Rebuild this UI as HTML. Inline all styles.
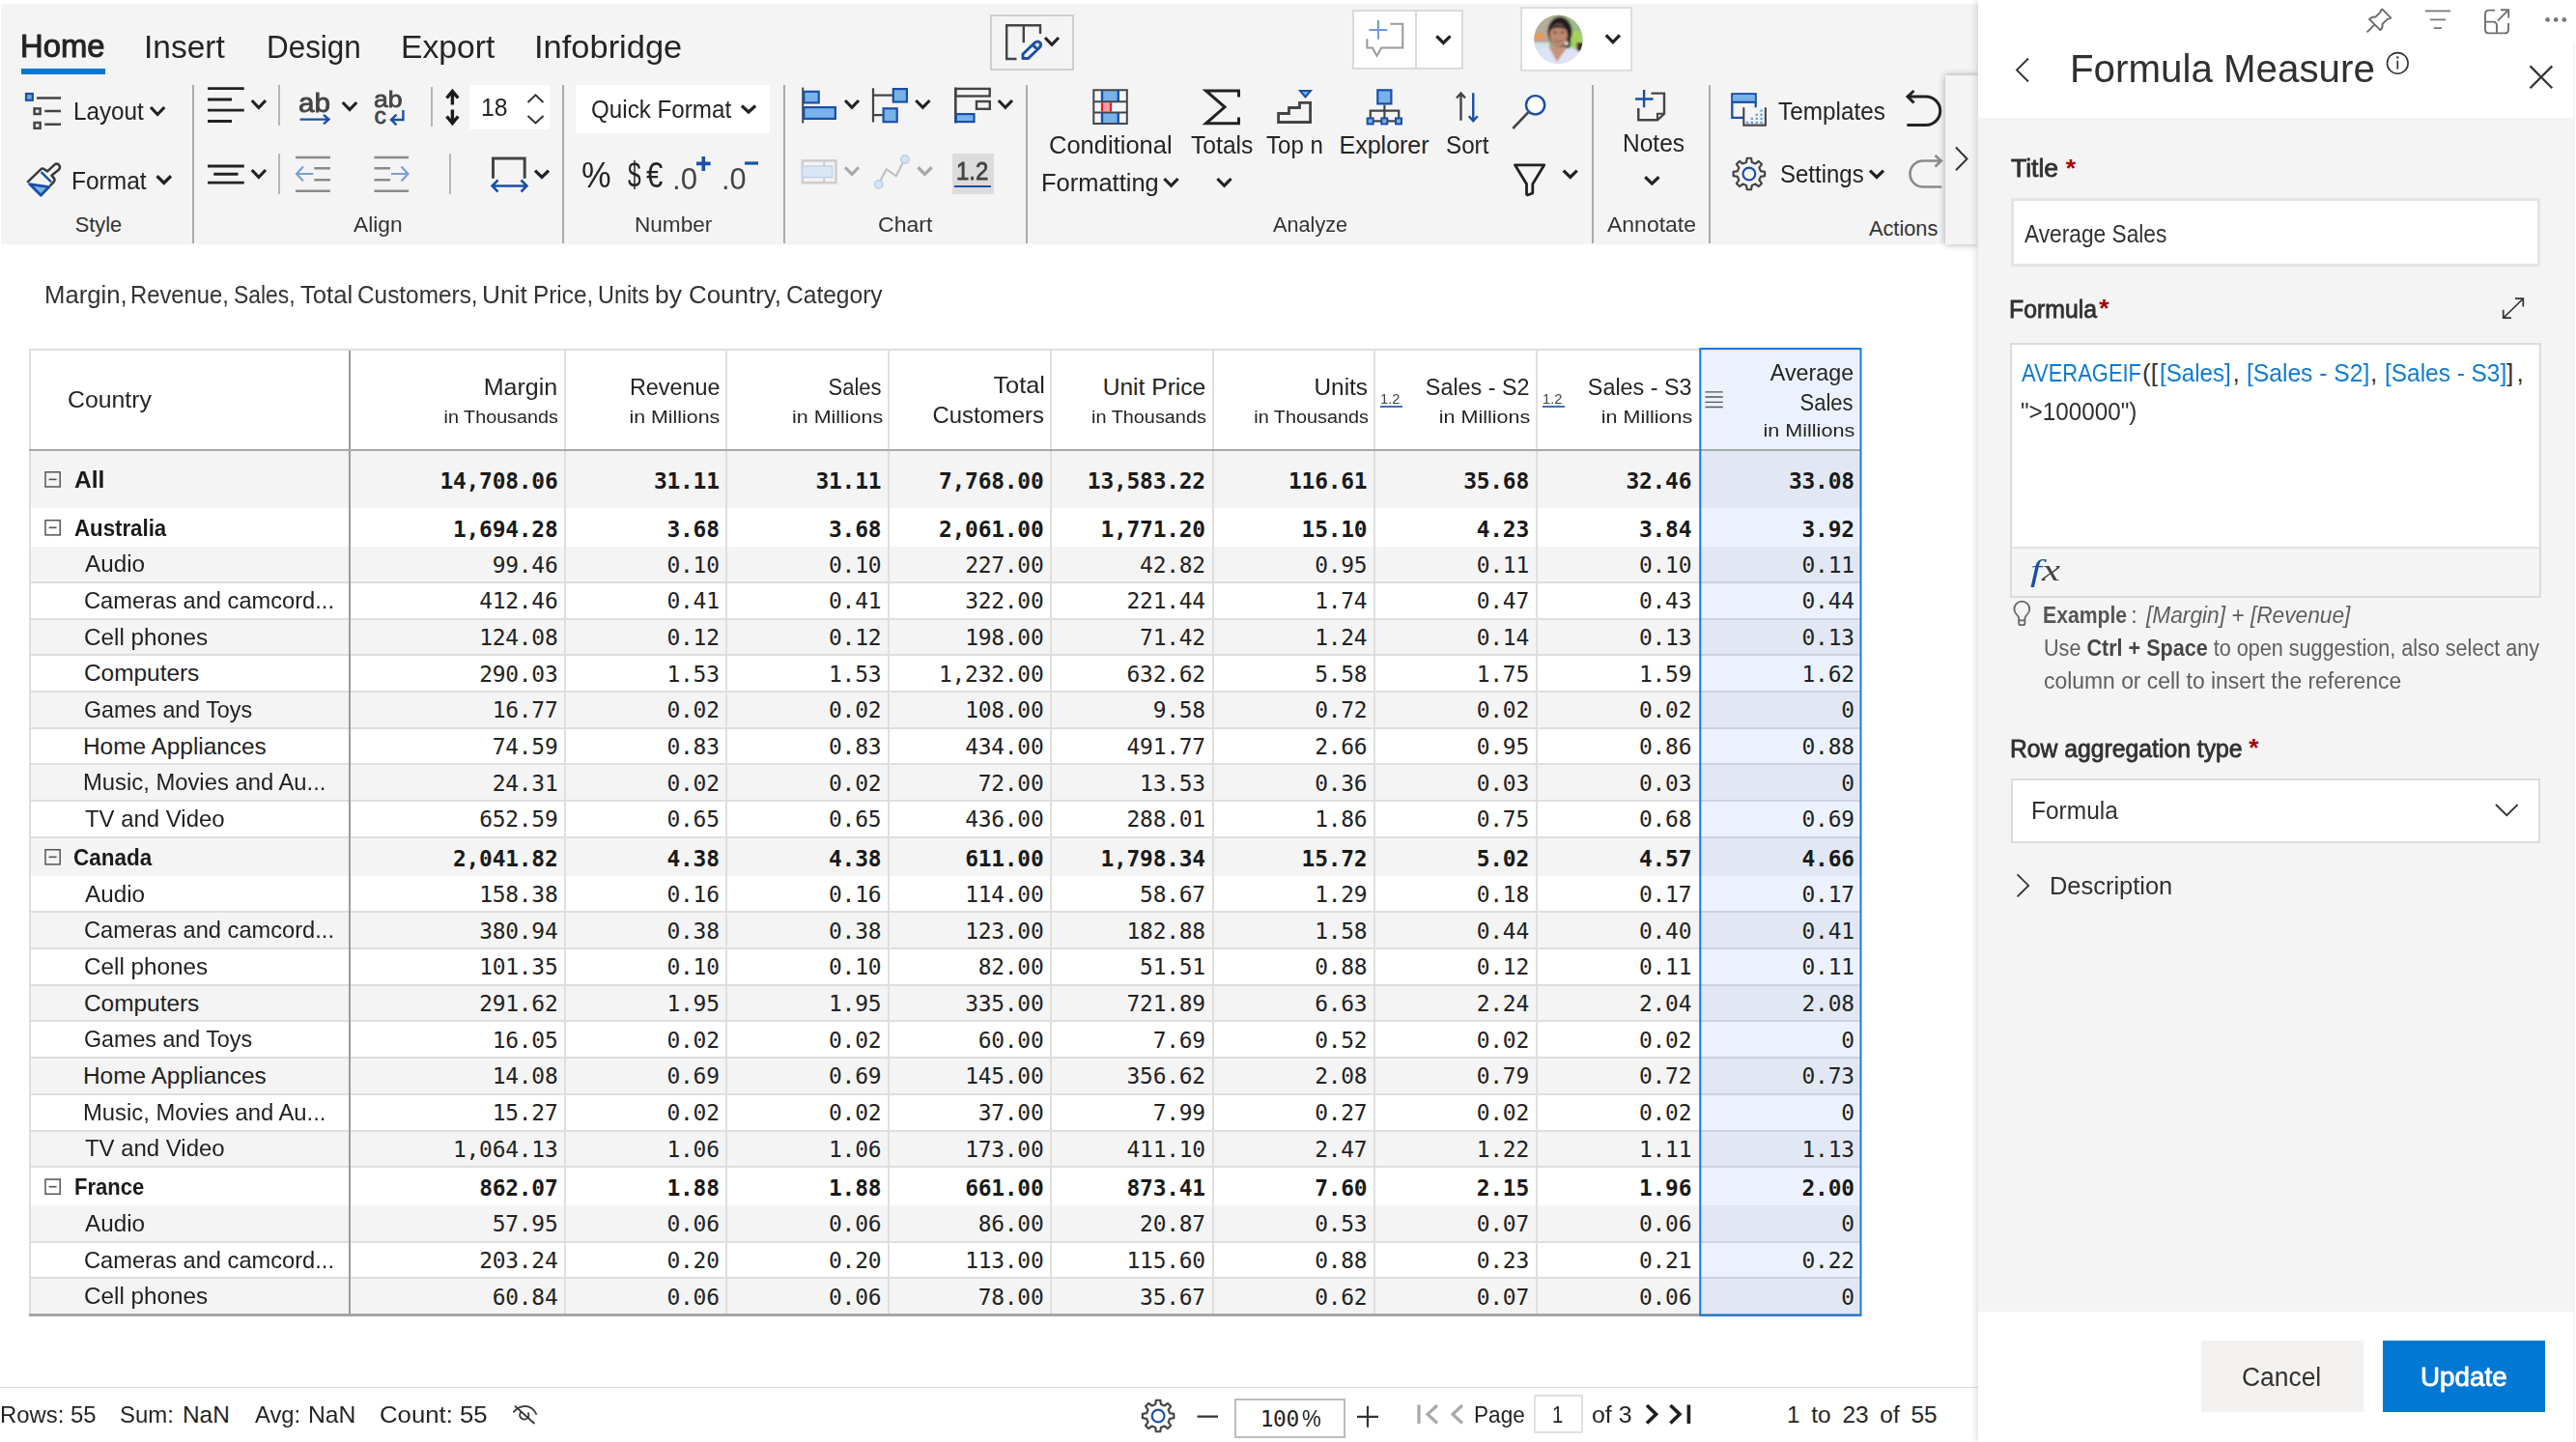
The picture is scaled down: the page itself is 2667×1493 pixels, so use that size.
<!DOCTYPE html>
<html lang="en"><head><meta charset="utf-8"><title>Formula Measure</title>
<style>
html,body{margin:0;padding:0;background:#fff;}
body{width:2667px;height:1493px;position:relative;overflow:hidden;font-family:"Liberation Sans", sans-serif;}
#bg div{position:absolute;box-sizing:border-box;}
#ic{position:absolute;left:0;top:0;}
.t{position:absolute;white-space:pre;display:block;}
.m{font-family:"DejaVu Sans Mono", "Liberation Mono", monospace;}
.f{font-family:"Liberation Serif", serif;}
</style></head><body>
<div id="bg">
<div style="left:1.00px;top:4.00px;width:2047.00px;height:249.00px;background:#f4f4f4;"></div>
<div style="left:22.00px;top:71.30px;width:87.30px;height:5.50px;background:#0078d4;"></div>
<div style="left:198.60px;top:88.00px;width:2.00px;height:164.00px;background:#ababab;"></div>
<div style="left:581.70px;top:88.00px;width:2.00px;height:164.00px;background:#ababab;"></div>
<div style="left:810.70px;top:88.00px;width:2.00px;height:164.00px;background:#ababab;"></div>
<div style="left:1062.00px;top:88.00px;width:2.00px;height:164.00px;background:#ababab;"></div>
<div style="left:1648.40px;top:88.00px;width:2.00px;height:164.00px;background:#ababab;"></div>
<div style="left:1769.40px;top:88.00px;width:2.00px;height:164.00px;background:#ababab;"></div>
<div style="left:288.30px;top:88.00px;width:2.00px;height:41.75px;background:#b5b5b5;"></div>
<div style="left:445.50px;top:90.00px;width:2.00px;height:41.25px;background:#b5b5b5;"></div>
<div style="left:288.30px;top:159.40px;width:2.00px;height:41.85px;background:#b5b5b5;"></div>
<div style="left:464.90px;top:159.40px;width:2.00px;height:41.85px;background:#b5b5b5;"></div>
<div style="left:486.00px;top:88.00px;width:83.00px;height:46.00px;background:#fff;"></div>
<div style="left:595.90px;top:88.00px;width:201.35px;height:49.75px;background:#fff;"></div>
<div style="left:986.00px;top:159.10px;width:42.50px;height:42.15px;background:#dcdcdc;"></div>
<div style="left:988.00px;top:191.90px;width:38.00px;height:2.10px;background:#1a4fa8;"></div>
<div style="left:1024.50px;top:14.75px;width:87.00px;height:57.75px;background:#f4f4f4;border:2px solid #cfcfcf;"></div>
<div style="left:1400.20px;top:9.90px;width:114.70px;height:62.00px;background:#fff;border:2px solid #dadada;"></div>
<div style="left:1465.40px;top:11.00px;width:1.60px;height:60.00px;background:#dadada;"></div>
<div style="left:1574.00px;top:7.30px;width:115.90px;height:66.40px;background:#fff;border:2px solid #dedede;"></div>
<div style="left:2013.60px;top:77.75px;width:34.40px;height:175.25px;background:#f4f4f4;box-shadow:0 0 7px rgba(0,0,0,.35);"></div>
<div style="left:30.30px;top:466.00px;width:1897.10px;height:60.00px;background:#f4f4f4;"></div>
<div style="left:30.30px;top:565.60px;width:1897.10px;height:37.68px;background:#f4f4f4;"></div>
<div style="left:30.30px;top:640.96px;width:1897.10px;height:37.68px;background:#f4f4f4;"></div>
<div style="left:30.30px;top:716.32px;width:1897.10px;height:37.68px;background:#f4f4f4;"></div>
<div style="left:30.30px;top:791.68px;width:1897.10px;height:37.68px;background:#f4f4f4;"></div>
<div style="left:30.30px;top:867.04px;width:1897.10px;height:39.90px;background:#f4f4f4;"></div>
<div style="left:30.30px;top:944.62px;width:1897.10px;height:37.68px;background:#f4f4f4;"></div>
<div style="left:30.30px;top:1019.98px;width:1897.10px;height:37.68px;background:#f4f4f4;"></div>
<div style="left:30.30px;top:1095.34px;width:1897.10px;height:37.68px;background:#f4f4f4;"></div>
<div style="left:30.30px;top:1170.70px;width:1897.10px;height:37.68px;background:#f4f4f4;"></div>
<div style="left:30.30px;top:1248.28px;width:1897.10px;height:37.68px;background:#f4f4f4;"></div>
<div style="left:30.30px;top:1323.64px;width:1897.10px;height:37.68px;background:#f4f4f4;"></div>
<div style="left:30.30px;top:602.08px;width:1897.10px;height:2.00px;background:#dedede;"></div>
<div style="left:30.30px;top:639.76px;width:1897.10px;height:2.00px;background:#dedede;"></div>
<div style="left:30.30px;top:677.44px;width:1897.10px;height:2.00px;background:#dedede;"></div>
<div style="left:30.30px;top:715.12px;width:1897.10px;height:2.00px;background:#dedede;"></div>
<div style="left:30.30px;top:752.80px;width:1897.10px;height:2.00px;background:#dedede;"></div>
<div style="left:30.30px;top:790.48px;width:1897.10px;height:2.00px;background:#dedede;"></div>
<div style="left:30.30px;top:828.16px;width:1897.10px;height:2.00px;background:#dedede;"></div>
<div style="left:30.30px;top:865.84px;width:1897.10px;height:2.00px;background:#dedede;"></div>
<div style="left:30.30px;top:943.42px;width:1897.10px;height:2.00px;background:#dedede;"></div>
<div style="left:30.30px;top:981.10px;width:1897.10px;height:2.00px;background:#dedede;"></div>
<div style="left:30.30px;top:1018.78px;width:1897.10px;height:2.00px;background:#dedede;"></div>
<div style="left:30.30px;top:1056.46px;width:1897.10px;height:2.00px;background:#dedede;"></div>
<div style="left:30.30px;top:1094.14px;width:1897.10px;height:2.00px;background:#dedede;"></div>
<div style="left:30.30px;top:1131.82px;width:1897.10px;height:2.00px;background:#dedede;"></div>
<div style="left:30.30px;top:1169.50px;width:1897.10px;height:2.00px;background:#dedede;"></div>
<div style="left:30.30px;top:1207.18px;width:1897.10px;height:2.00px;background:#dedede;"></div>
<div style="left:30.30px;top:1284.76px;width:1897.10px;height:2.00px;background:#dedede;"></div>
<div style="left:30.30px;top:1322.44px;width:1897.10px;height:2.00px;background:#dedede;"></div>
<div style="left:1759.40px;top:360.90px;width:168.00px;height:1000.42px;background:rgba(20,110,230,0.085);"></div>
<div style="left:584.20px;top:360.90px;width:2.00px;height:1000.42px;background:#dfdfdf;"></div>
<div style="left:751.40px;top:360.90px;width:2.00px;height:1000.42px;background:#dfdfdf;"></div>
<div style="left:919.00px;top:360.90px;width:2.00px;height:1000.42px;background:#dfdfdf;"></div>
<div style="left:1087.20px;top:360.90px;width:2.00px;height:1000.42px;background:#dfdfdf;"></div>
<div style="left:1254.60px;top:360.90px;width:2.00px;height:1000.42px;background:#dfdfdf;"></div>
<div style="left:1422.10px;top:360.90px;width:2.00px;height:1000.42px;background:#dfdfdf;"></div>
<div style="left:1589.70px;top:360.90px;width:2.00px;height:1000.42px;background:#dfdfdf;"></div>
<div style="left:360.90px;top:360.90px;width:2.20px;height:1000.42px;background:#9b9b9b;"></div>
<div style="left:30.30px;top:360.90px;width:1897.10px;height:2.00px;background:#dedede;"></div>
<div style="left:30.30px;top:360.90px;width:2.00px;height:1000.42px;background:#dedede;"></div>
<div style="left:30.30px;top:465.00px;width:1897.10px;height:2.00px;background:#a9a9a9;"></div>
<div style="left:30.30px;top:1360.32px;width:1897.10px;height:2.20px;background:#a6a6a6;"></div>
<div style="left:1429.00px;top:420.40px;width:23.00px;height:2.00px;background:#3d6fc0;"></div>
<div style="left:1596.50px;top:420.40px;width:23.00px;height:2.00px;background:#3d6fc0;"></div>
<div style="left:0.00px;top:1435.60px;width:2048.00px;height:1.80px;background:#dedede;"></div>
<div style="left:1277.60px;top:1448.20px;width:115.30px;height:41.20px;background:#fff;border:2px solid #bdbdbd;"></div>
<div style="left:1588.00px;top:1443.50px;width:51.40px;height:40.80px;background:#fff;border:2px solid #e1e1e1;"></div>
<div style="left:2048.00px;top:0.00px;width:619.00px;height:1493.00px;background:#fff;box-shadow:-1px 0 8px rgba(0,0,0,.17);"></div>
<div style="left:2048.00px;top:121.80px;width:617.00px;height:1236.20px;background:#f4f4f4;"></div>
<div style="left:2664.40px;top:44.00px;width:1.20px;height:1449.00px;background:#f3f3f3;"></div>
<div style="left:2081.90px;top:205.40px;width:548.50px;height:70.60px;background:#fff;border:3px solid #e4e4e4;"></div>
<div style="left:2081.40px;top:355.00px;width:549.20px;height:263.60px;background:#f4f4f4;border:2px solid #dcdcdc;"></div>
<div style="left:2083.40px;top:356.80px;width:545.40px;height:209.80px;background:#fff;"></div>
<div style="left:2083.40px;top:566.40px;width:545.40px;height:1.40px;background:#e3e3e3;"></div>
<div style="left:2081.90px;top:806.20px;width:548.40px;height:66.50px;background:#fff;border:2px solid #dcdcdc;"></div>
<div style="left:2279.00px;top:1388.10px;width:168.00px;height:74.30px;background:#f3f2f1;"></div>
<div style="left:2466.70px;top:1388.10px;width:168.00px;height:74.30px;background:#0078d4;"></div>
</div>
<svg id="ic" width="2667" height="1493" viewBox="0 0 2667 1493" stroke-linecap="butt" stroke-linejoin="miter">
<path d="M156.00 111.00 L163.12 118.50 L170.25 111.00" fill="none" stroke="#222" stroke-width="3.2"/>
<path d="M162.50 182.25 L169.75 189.40 L177.00 182.25" fill="none" stroke="#222" stroke-width="3.2"/>
<path d="M260.75 104.00 L267.88 111.50 L275.00 104.00" fill="none" stroke="#222" stroke-width="3.2"/>
<path d="M260.75 176.00 L267.88 183.50 L275.00 176.00" fill="none" stroke="#222" stroke-width="3.2"/>
<path d="M354.75 106.00 L362.00 113.50 L369.25 106.00" fill="none" stroke="#222" stroke-width="3.2"/>
<path d="M554.00 176.60 L561.00 183.50 L568.00 176.60" fill="none" stroke="#222" stroke-width="3.2"/>
<path d="M767.90 109.50 L775.00 116.00 L782.10 109.50" fill="none" stroke="#222" stroke-width="3.2"/>
<path d="M875.00 104.00 L882.00 111.25 L889.00 104.00" fill="none" stroke="#222" stroke-width="3.2"/>
<path d="M948.25 104.00 L955.38 111.25 L962.50 104.00" fill="none" stroke="#222" stroke-width="3.2"/>
<path d="M1033.75 104.00 L1040.88 111.25 L1048.00 104.00" fill="none" stroke="#222" stroke-width="3.2"/>
<path d="M1205.40 185.00 L1212.50 192.25 L1219.60 185.00" fill="none" stroke="#222" stroke-width="3.2"/>
<path d="M1260.40 185.00 L1267.50 192.25 L1274.60 185.00" fill="none" stroke="#222" stroke-width="3.2"/>
<path d="M1618.75 176.60 L1625.75 183.50 L1632.75 176.60" fill="none" stroke="#222" stroke-width="3.2"/>
<path d="M1703.25 183.25 L1710.38 190.10 L1717.50 183.25" fill="none" stroke="#222" stroke-width="3.2"/>
<path d="M1936.00 176.60 L1943.00 183.50 L1950.00 176.60" fill="none" stroke="#222" stroke-width="3.2"/>
<path d="M1082.00 39.00 L1089.00 46.30 L1096.00 39.00" fill="none" stroke="#222" stroke-width="3.2"/>
<path d="M1487.30 37.30 L1494.40 44.40 L1501.50 37.30" fill="none" stroke="#222" stroke-width="3.2"/>
<path d="M1662.80 36.40 L1669.90 43.60 L1677.00 36.40" fill="none" stroke="#222" stroke-width="3.2"/>
<path d="M875.00 173.25 L882.00 180.40 L889.00 173.25" fill="none" stroke="#a8a8a8" stroke-width="3.2"/>
<path d="M950.40 173.25 L957.50 180.40 L964.60 173.25" fill="none" stroke="#a8a8a8" stroke-width="3.2"/>
<path d="M546.5 106 L554.5 98.3 L562.5 106 M546.5 120 L554.5 127.5 L562.5 120" fill="none" stroke="#333" stroke-width="2"/>
<rect x="27" y="97" width="6.8" height="6.8" fill="#6aa5e8" stroke="#1a4fa8" stroke-width="2.2"/>
<g fill="none" stroke="#444" stroke-width="2.5"><path d="M38 101.4 H63 M46.25 115 H63 M46.25 128.75 H63"/><rect x="35.6" y="112.4" width="6" height="5.6"/><rect x="35.6" y="127" width="6" height="5.8"/></g>
<path d="M28.2 188.9 L42.2 175.4 Q43.8 173.8 45.6 175.1 L49.1 177.4 L56.4 170.6 Q59.2 168.6 61.2 170.9 Q63 173.3 60.8 175.8 L53.4 181.8 L55.6 184 Q57.4 186.2 55.6 188.4 L51.6 192.7" fill="none" stroke="#3a3a3a" stroke-width="2.5" stroke-linejoin="round"/>
<path d="M30.6 190.6 L50.8 193.6 L42.3 202.2 Z" fill="#78b2e8" stroke="#1a4fa8" stroke-width="2.8" stroke-linejoin="round"/>
<path d="M42.6 178.2 L53 188.4" stroke="#1a4fa8" stroke-width="2.4"/>
<path d="M215 91.7 H252.75 M215 103 H240 M215 114.2 H252.75 M215 125.5 H240" stroke="#222" stroke-width="2.8"/>
<path d="M215 172 H252.75 M221.25 180.25 H246.5 M215 189.2 H252.75" stroke="#222" stroke-width="2.8"/>
<path d="M310.6 123.6 H340 M335 118.8 L340.5 123.6 L335 128.4" fill="none" stroke="#1a4fa8" stroke-width="2.4"/>
<path d="M417.4 114 V124 H405.5 M410.5 118.6 L405 124 L410.5 129.4" fill="none" stroke="#1a4fa8" stroke-width="2.4"/>
<path d="M468.4 96 V108.5 M468.4 113.5 V126 M462.5 101.5 L468.4 94.5 L474.3 101.5 M462.5 120.5 L468.4 127.5 L474.3 120.5" fill="none" stroke="#1a1a1a" stroke-width="3.4"/>
<path d="M306 163.1 H341.9 M325.25 174.3 H341.9 M325.25 186.2 H341.9 M306 197.7 H341.9" stroke="#8a8a8a" stroke-width="2.5"/>
<path d="M307.5 180 H324.4 M314 172.5 L307 180 L314 187.5" fill="none" stroke="#7b9fd6" stroke-width="2.2"/>
<path d="M387.5 163.1 H423.1 M387.5 174.3 H404 M387.5 186.2 H404 M387.5 197.7 H423.1" stroke="#8a8a8a" stroke-width="2.5"/>
<path d="M405 180 H422 M415.5 172.5 L422.5 180 L415.5 187.5" fill="none" stroke="#7b9fd6" stroke-width="2.2"/>
<path d="M510.5 184.75 V164 H543.2 V184.75" fill="none" stroke="#444" stroke-width="3"/>
<path d="M510 192.5 H545 M515.5 186.5 L509.5 192.5 L515.5 198.5 M539.5 186.5 L545.5 192.5 L539.5 198.5" fill="none" stroke="#1a4fa8" stroke-width="2.5"/>
<path d="M721 169.4 H735.6 M728.3 162 V176.9" stroke="#1a4fa8" stroke-width="3.6"/>
<path d="M771 169 H785" stroke="#1a4fa8" stroke-width="3.2"/>
<path d="M831.2 90.6 V127.5" stroke="#444" stroke-width="2"/>
<rect x="832.3" y="94.8" width="15.4" height="11.6" fill="#78b2e8" stroke="#1a4fa8" stroke-width="2.2"/>
<rect x="832.3" y="111.1" width="32.6" height="11.8" fill="#78b2e8" stroke="#1a4fa8" stroke-width="2.2"/>
<path d="M904 91.25 V126.5 M904 98.6 H924 M904 119.1 H914" fill="none" stroke="#444" stroke-width="2.2"/>
<rect x="924.8" y="92.1" width="14.1" height="13.4" fill="#78b2e8" stroke="#1a4fa8" stroke-width="2.2"/>
<rect x="914.6" y="112.3" width="14.1" height="13.9" fill="#78b2e8" stroke="#1a4fa8" stroke-width="2.2"/>
<path d="M989.3 90.6 V127.5" stroke="#444" stroke-width="2.6"/>
<rect x="989.3" y="91.9" width="35.4" height="7.6" fill="none" stroke="#444" stroke-width="2.4"/>
<rect x="1011" y="105" width="13.8" height="7.8" fill="none" stroke="#444" stroke-width="2.4"/>
<rect x="989.9" y="118.1" width="18.6" height="8" fill="#78b2e8" stroke="#1a4fa8" stroke-width="2.2"/>
<rect x="830.8" y="166.4" width="34.7" height="22.8" fill="none" stroke="#cdcdcd" stroke-width="2.6"/>
<path d="M853.2 166 V190" stroke="#cdcdcd" stroke-width="2.2"/>
<rect x="830.6" y="172" width="31" height="11.6" fill="#d9e6f5" stroke="#c3d5ec" stroke-width="1.6"/>
<path d="M911.25 187.5 L917.75 175.25 L927.75 182.25 L935 168.1" fill="none" stroke="#bdbdbd" stroke-width="2"/>
<circle cx="936.9" cy="165" r="4.2" fill="#d5e3f3" stroke="#b8cde8" stroke-width="1.4"/><circle cx="909.75" cy="191" r="4.2" fill="#d5e3f3" stroke="#b8cde8" stroke-width="1.4"/>
<rect x="1140" y="93.3" width="18.8" height="11.9" fill="#78b2e8"/><rect x="1140" y="116.6" width="18.8" height="11.3" fill="#78b2e8"/>
<rect x="1140" y="106.2" width="10.6" height="9.4" fill="#fb9aa4"/>
<path d="M1132.3 93.3 H1166.8 V127.9 H1132.3 Z M1132.3 105.2 H1166.8 M1132.3 116.6 H1166.8" fill="none" stroke="#444" stroke-width="2"/>
<path d="M1141 93.3 V105.2 M1157.8 93.3 V105.2 M1141 116.6 V128.9 M1157.8 116.6 V128.9" stroke="#1a4fa8" stroke-width="2.4"/>
<path d="M1141 106.2 V115.6 M1150 106.2 V115.6" stroke="#e02020" stroke-width="2.2"/>
<path d="M1282.5 100.5 V94 H1248.5 L1268 110.8 L1248.5 127.8 H1282.5 V121.5" fill="none" stroke="#222" stroke-width="3"/>
<path d="M1323.6 126.5 V117.5 H1334.5 V111.5 H1345.5 V106.3 H1356.6 V126.5 Z" fill="none" stroke="#444" stroke-width="2.8"/>
<path d="M1346 94 H1357 L1351.5 100.5 Z" fill="#78b2e8" stroke="#1a4fa8" stroke-width="2"/>
<path d="M1433.4 108.5 V122 M1418.8 122 V114.7 H1448.2 V122 M1422 125.4 H1444" fill="none" stroke="#444" stroke-width="2.2"/>
<rect x="1426.3" y="93.3" width="14.1" height="14.1" fill="#78b2e8" stroke="#1a4fa8" stroke-width="2.2"/>
<rect x="1415.7" y="122.4" width="6" height="6" fill="#78b2e8" stroke="#1a4fa8" stroke-width="2"/>
<rect x="1430.3" y="122.4" width="6" height="6" fill="#78b2e8" stroke="#1a4fa8" stroke-width="2"/>
<rect x="1445" y="122.4" width="6" height="6" fill="#78b2e8" stroke="#1a4fa8" stroke-width="2"/>
<path d="M1512.5 97 V124.75 M1508 101.5 L1512.5 96.5 L1517 101.5" fill="none" stroke="#444" stroke-width="2.4"/>
<path d="M1525.25 96.25 V125 M1520.8 120.3 L1525.25 125.3 L1529.8 120.3" fill="none" stroke="#1a4fa8" stroke-width="2.4"/>
<circle cx="1589.6" cy="108.75" r="9.6" fill="#fff" stroke="#1a4fa8" stroke-width="2.4"/>
<path d="M1582.2 116.4 L1566.3 133" stroke="#444" stroke-width="2.6"/>
<path d="M1568.5 170.8 H1598.8 L1586.8 190.5 V200 L1581.5 202 L1580.5 201 V190.5 Z" fill="none" stroke="#222" stroke-width="2.8" stroke-linejoin="round"/>
<path d="M1709.5 96.6 H1723 V117.8 L1716 124.3 H1696.3 V112" fill="none" stroke="#444" stroke-width="2.4"/>
<path d="M1723 117.8 H1716 V124.3" fill="none" stroke="#444" stroke-width="2"/>
<path d="M1693 102.5 H1711.5 M1702.1 93 V111.25" stroke="#1a4fa8" stroke-width="2.4"/>
<rect x="1793.3" y="97.3" width="24.4" height="24.6" fill="#f4f4f4" stroke="#1a4fa8" stroke-width="2.3"/>
<rect x="1794.4" y="98.4" width="22.2" height="6.6" fill="#78b2e8"/><path d="M1793.3 105.8 H1817.7" stroke="#1a4fa8" stroke-width="2.3"/>
<path d="M1805.3 111.3 V129.6 H1827.9 V111.3" fill="#f4f4f4" stroke="#444" stroke-width="2.1"/>
<rect x="1822.4" y="125.75" width="2.3" height="2.3" fill="#5fa0e8"/>
<rect x="1817.6" y="125.75" width="2.3" height="2.3" fill="#5fa0e8"/>
<rect x="1812.7" y="125.75" width="2.3" height="2.3" fill="#5fa0e8"/>
<rect x="1807.9" y="125.75" width="2.3" height="2.3" fill="#5fa0e8"/>
<rect x="1822.4" y="121.75" width="2.3" height="2.3" fill="#5fa0e8"/>
<rect x="1817.6" y="121.75" width="2.3" height="2.3" fill="#5fa0e8"/>
<rect x="1812.7" y="121.75" width="2.3" height="2.3" fill="#5fa0e8"/>
<rect x="1822.4" y="117.65" width="2.3" height="2.3" fill="#5fa0e8"/>
<rect x="1817.6" y="117.65" width="2.3" height="2.3" fill="#5fa0e8"/>
<rect x="1822.4" y="113.45" width="2.3" height="2.3" fill="#5fa0e8"/>
<path d="M1808.72 163.75 L1813.08 163.75 L1813.77 168.04 L1817.33 169.51 L1820.85 166.96 L1823.94 170.05 L1821.39 173.57 L1822.86 177.13 L1827.15 177.82 L1827.15 182.18 L1822.86 182.87 L1821.39 186.43 L1823.94 189.95 L1820.85 193.04 L1817.33 190.49 L1813.77 191.96 L1813.08 196.25 L1808.72 196.25 L1808.03 191.96 L1804.47 190.49 L1800.95 193.04 L1797.86 189.95 L1800.41 186.43 L1798.94 182.87 L1794.65 182.18 L1794.65 177.82 L1798.94 177.13 L1800.41 173.57 L1797.86 170.05 L1800.95 166.96 L1804.47 169.51 L1808.03 168.04 Z" fill="none" stroke="#444" stroke-width="2.2" stroke-linejoin="round"/>
<circle cx="1810.9" cy="180" r="6.4" fill="none" stroke="#1a4fa8" stroke-width="2.2"/>
<path d="M1975.5 100 H1994 A14 14 0 0 1 1994 129.5 H1974.4 M1981.5 94 L1975 100 L1981.5 106.5" fill="none" stroke="#222" stroke-width="3"/>
<path d="M2009.5 166.5 H1991 A13.5 13.5 0 0 0 1991 193.5 H2010.4 M2003.5 161 L2009.8 166.5 L2003.5 172.5" fill="none" stroke="#8a8a8a" stroke-width="2.6"/>
<path d="M2025 152.5 L2036.5 164.5 L2025 176.3" fill="none" stroke="#333" stroke-width="2"/>
<path d="M1052.5 61 H1042.2 V26.2 H1077 V35 M1059.8 26.2 V44.2" fill="none" stroke="#444" stroke-width="2.4"/>
<path d="M1059 56 L1071 44.5 Q1074.5 41.8 1076.8 44.2 Q1078.6 46.8 1076 49.5 L1064.5 60.5 H1059 Z M1069.2 46.4 L1074.2 51.4" fill="none" stroke="#1a4fa8" stroke-width="3" stroke-linejoin="round"/>
<path d="M1439.4 24.8 H1452.3 V49.5 H1430.2 L1425.5 57.8 L1420.9 49.5 H1415.4 V40.3" fill="none" stroke="#9a9a9a" stroke-width="2"/>
<path d="M1417.4 31 H1436.4 M1426.9 21.1 V40.7" stroke="#6c9bd6" stroke-width="2"/>
<defs><clipPath id="avc"><circle cx="1613.4" cy="40.9" r="25.3"/></clipPath><filter id="avb" x="-10%" y="-10%" width="120%" height="120%"><feGaussianBlur stdDeviation="1.1"/></filter></defs>
<g clip-path="url(#avc)"><g filter="url(#avb)"><rect x="1584" y="11" width="60" height="60" fill="#a3ad8c"/><rect x="1584" y="11" width="22" height="30" fill="#b4ac98"/><rect x="1622" y="14" width="22" height="20" fill="#9fba86"/><rect x="1624" y="32" width="20" height="22" fill="#a4d162"/><rect x="1586" y="35" width="13" height="4.4" fill="#f2973a"/><rect x="1586" y="39.4" width="14" height="5" fill="#c9a08c"/><rect x="1586" y="44" width="18" height="10" fill="#cfe3e6"/><rect x="1632.5" y="44" width="8" height="11" fill="#4a2433"/><path d="M1586 72 V56 Q1596 47.5 1604 48.5 L1612 62 L1623 48.5 Q1634 50 1642 60 V72 Z" fill="#dfe3f6"/><path d="M1603.5 48.5 L1612 64 L1623.5 47.5 Z" fill="#c59478"/><ellipse cx="1615" cy="33" rx="12.6" ry="15.6" fill="#221b22"/><path d="M1622 36 Q1628.5 40 1625 50 L1620 49 Z" fill="#221b22"/><ellipse cx="1613.6" cy="36.6" rx="9.3" ry="11.6" fill="#c08a72"/><path d="M1605 31 Q1613 20.5 1622.5 31 Q1613 26.5 1605 31 Z" fill="#221b22"/><circle cx="1621.8" cy="45" r="1.9" fill="#f3f1ea"/><ellipse cx="1610" cy="33.4" rx="2.2" ry="1" fill="#5e3b32"/><ellipse cx="1617.6" cy="33.6" rx="2.2" ry="1" fill="#5e3b32"/><path d="M1609.4 41.6 Q1613.6 44.4 1617.8 41.6" fill="none" stroke="#8d5548" stroke-width="1.2"/></g></g>
<rect x="1760.3" y="361.00" width="166.2" height="1000.82" fill="none" stroke="#1b7bdc" stroke-width="2"/>
<path d="M1765.5 405.8 H1783.8 M1765.5 411 H1783.8 M1765.5 416.3 H1783.8 M1765.5 421.5 H1783.8" stroke="#555" stroke-width="1.3"/>
<rect x="47.0" y="488.80" width="15.2" height="15.2" fill="none" stroke="#555" stroke-width="1.5"/><path d="M50.6 496.40 H58.6" stroke="#555" stroke-width="1.6"/>
<rect x="47.0" y="538.70" width="15.2" height="15.2" fill="none" stroke="#555" stroke-width="1.5"/><path d="M50.6 546.30 H58.6" stroke="#555" stroke-width="1.6"/>
<rect x="47.0" y="879.74" width="15.2" height="15.2" fill="none" stroke="#555" stroke-width="1.5"/><path d="M50.6 887.34 H58.6" stroke="#555" stroke-width="1.6"/>
<rect x="47.0" y="1221.08" width="15.2" height="15.2" fill="none" stroke="#555" stroke-width="1.5"/><path d="M50.6 1228.68 H58.6" stroke="#555" stroke-width="1.6"/>
<g fill="none" stroke="#333" stroke-width="1.8"><path d="M531.4 1462.4 Q537 1455.6 544 1455.8 Q551.6 1456.2 555.6 1464.6"/><path d="M539.6 1461.6 A4.6 4.6 0 1 0 546.6 1462.4"/><path d="M533 1455.6 L553.4 1474"/></g>
<path d="M1196.92 1449.75 L1201.28 1449.75 L1201.97 1454.04 L1205.53 1455.51 L1209.05 1452.96 L1212.14 1456.05 L1209.59 1459.57 L1211.06 1463.13 L1215.35 1463.82 L1215.35 1468.18 L1211.06 1468.87 L1209.59 1472.43 L1212.14 1475.95 L1209.05 1479.04 L1205.53 1476.49 L1201.97 1477.96 L1201.28 1482.25 L1196.92 1482.25 L1196.23 1477.96 L1192.67 1476.49 L1189.15 1479.04 L1186.06 1475.95 L1188.61 1472.43 L1187.14 1468.87 L1182.85 1468.18 L1182.85 1463.82 L1187.14 1463.13 L1188.61 1459.57 L1186.06 1456.05 L1189.15 1452.96 L1192.67 1455.51 L1196.23 1454.04 Z" fill="none" stroke="#444" stroke-width="2.2" stroke-linejoin="round"/>
<circle cx="1199.1" cy="1466" r="6.4" fill="none" stroke="#1a4fa8" stroke-width="2.2"/>
<path d="M1239.5 1466.6 H1261 M1405 1466.8 H1427 M1416 1455.8 V1477.8" stroke="#333" stroke-width="2.2"/>
<path d="M1469 1454.5 V1474 M1488 1455 L1478 1464.2 L1488 1473.5 M1514 1455 L1504 1464.2 L1514 1473.5" fill="none" stroke="#a9a9a9" stroke-width="3.2"/>
<path d="M1705 1455 L1714.6 1464.2 L1705 1473.5 M1729.4 1455 L1739 1464.2 L1729.4 1473.5 M1748.4 1454.5 V1474" fill="none" stroke="#1f1f1f" stroke-width="3.6"/>
<path d="M2100 60.5 L2088 72.5 L2100 84.5" fill="none" stroke="#333" stroke-width="1.9"/>
<circle cx="2482.3" cy="65.4" r="10.8" fill="none" stroke="#333" stroke-width="1.6"/><path d="M2482.3 62.8 V71.6" stroke="#333" stroke-width="1.7"/><circle cx="2482.3" cy="59.4" r="1.2" fill="#333"/>
<path d="M2619.5 68.4 L2642.3 91.2 M2642.3 68.4 L2619.5 91.2" stroke="#333" stroke-width="2.2"/>
<g fill="none" stroke="#666" stroke-width="1.8" stroke-linejoin="round"><path d="M2466.2 9.4 L2475.4 18.6 Q2473.5 20 2471.8 19.6 L2466.6 24.8 Q2467.2 28.6 2464.4 31.2 L2453 19.8 Q2455.6 17 2459.4 17.6 L2464.6 12.4 Q2464.6 10.4 2466.2 9.4 Z"/><path d="M2458.6 25.4 L2450.6 33.4"/></g>
<path d="M2511 11.3 H2537 M2516 20.4 H2532 M2520 29.2 H2528" stroke="#777" stroke-width="1.8"/>
<g fill="none" stroke="#707070" stroke-width="1.9"><path d="M2583 10.6 H2577 Q2573 10.6 2573 14.6 V30.4 Q2573 34.4 2577 34.4 H2593 Q2597 34.4 2597 30.4 V24"/><path d="M2573 22.6 H2581 Q2585 22.6 2585 26.6 V34.4"/><path d="M2586 21.4 L2597 10.4 M2589 10.2 H2597.2 V18.4"/></g>
<circle cx="2637.6" cy="20.4" r="2.3" fill="#777"/>
<circle cx="2646.2" cy="20.4" r="2.3" fill="#777"/>
<circle cx="2654.8" cy="20.4" r="2.3" fill="#777"/>
<path d="M2592 329 L2612 309.5 M2604 309.2 H2612.3 V317.5 M2591.7 320.8 V329.2 H2600" fill="none" stroke="#333" stroke-width="1.7"/>
<g fill="none" stroke="#666" stroke-width="1.8" stroke-linejoin="round"><path d="M2090.2 642.4 V640.4 Q2090 638.4 2088.2 636.6 A7.9 7.9 0 1 1 2098.4 636.6 Q2096.6 638.4 2096.4 640.4 V642.4"/><path d="M2090.2 642.4 H2096.4 V645.2 Q2096.4 647.2 2094.4 647.2 H2092.2 Q2090.2 647.2 2090.2 645.2 Z"/></g>
<path d="M2584 833 L2595.3 844.2 L2606.6 833" fill="none" stroke="#333" stroke-width="1.8"/>
<path d="M2088.6 905.4 L2100.2 916.9 L2088.6 928.4" fill="none" stroke="#333" stroke-width="1.8"/>
</svg>
<div id="tx">
<span class="t" style="top:31.29px;font-size:33.8px;line-height:33.8px;color:#252423;-webkit-text-stroke:1.05px;left:21.36px;transform-origin:0 0;transform:scaleX(0.9696);">Home</span>
<span class="t" style="top:31.80px;font-size:33.2px;line-height:33.2px;color:#252423;left:149.47px;transform-origin:0 0;transform:scaleX(1.0090);">Insert</span>
<span class="t" style="top:31.80px;font-size:33.2px;line-height:33.2px;color:#252423;left:276.11px;transform-origin:0 0;transform:scaleX(0.9464);">Design</span>
<span class="t" style="top:31.80px;font-size:33.2px;line-height:33.2px;color:#252423;left:415.47px;transform-origin:0 0;transform:scaleX(1.0139);">Export</span>
<span class="t" style="top:31.80px;font-size:33.2px;line-height:33.2px;color:#252423;left:552.89px;transform-origin:0 0;transform:scaleX(1.0381);">Infobridge</span>
<span class="t" style="top:102.17px;font-size:26.5px;line-height:26.5px;color:#252423;left:75.92px;transform-origin:0 0;transform:scaleX(0.9156);">Layout</span>
<span class="t" style="top:174.42px;font-size:26.5px;line-height:26.5px;color:#252423;left:74.05px;transform-origin:0 0;transform:scaleX(0.9254);">Format</span>
<span class="t" style="top:222.15px;font-size:21.8px;line-height:21.8px;color:#333;left:77.75px;transform-origin:0 0;">Style</span>
<span class="t" style="top:222.15px;font-size:21.8px;line-height:21.8px;color:#333;left:366.25px;transform-origin:0 0;transform:scaleX(1.0434);">Align</span>
<span class="t" style="top:222.15px;font-size:21.8px;line-height:21.8px;color:#333;left:656.96px;transform-origin:0 0;transform:scaleX(1.0359);">Number</span>
<span class="t" style="top:222.15px;font-size:21.8px;line-height:21.8px;color:#333;left:908.69px;transform-origin:0 0;transform:scaleX(1.0575);">Chart</span>
<span class="t" style="top:222.15px;font-size:21.8px;line-height:21.8px;color:#333;left:1318.20px;transform-origin:0 0;transform:scaleX(0.9945);">Analyze</span>
<span class="t" style="top:221.75px;font-size:21.8px;line-height:21.8px;color:#333;left:1664.40px;transform-origin:0 0;transform:scaleX(1.0546);">Annotate</span>
<span class="t" style="top:225.55px;font-size:21.8px;line-height:21.8px;color:#333;left:1934.90px;transform-origin:0 0;">Actions</span>
<span class="t" style="top:92.92px;font-size:27.5px;line-height:27.5px;color:#444;-webkit-text-stroke:0.85px;left:308.92px;transform-origin:0 0;transform:scaleX(1.0753);">ab</span>
<span class="t" style="top:90.86px;font-size:24.5px;line-height:24.5px;color:#444;-webkit-text-stroke:0.76px;left:387.42px;transform-origin:0 0;transform:scaleX(1.0829);">ab</span>
<span class="t" style="top:107.96px;font-size:24.5px;line-height:24.5px;color:#444;-webkit-text-stroke:0.76px;left:387.50px;transform-origin:0 0;">c</span>
<span class="t" style="top:98.42px;font-size:26.5px;line-height:26.5px;color:#252423;left:497.53px;transform-origin:0 0;transform:scaleX(0.9350);">18</span>
<span class="t" style="top:100.49px;font-size:26px;line-height:26px;color:#252423;left:611.57px;transform-origin:0 0;transform:scaleX(0.9307);">Quick Format</span>
<span class="t" style="top:162.61px;font-size:37.5px;line-height:37.5px;color:#252423;left:601.83px;transform-origin:0 0;transform:scaleX(0.9194);">%</span>
<span class="t" style="top:162.61px;font-size:37.5px;line-height:37.5px;color:#252423;left:650.00px;transform-origin:0 0;transform:scaleX(0.6548);">$</span>
<span class="t" style="top:162.61px;font-size:37.5px;line-height:37.5px;color:#252423;left:668.75px;transform-origin:0 0;transform:scaleX(0.8333);">€</span>
<span class="t" style="top:169.11px;font-size:32px;line-height:32px;color:#444;left:696.05px;transform-origin:0 0;transform:scaleX(0.9732);">.0</span>
<span class="t" style="top:169.11px;font-size:32px;line-height:32px;color:#444;left:747.08px;transform-origin:0 0;transform:scaleX(0.9585);">.0</span>
<span class="t" style="top:165.01px;font-size:25.5px;line-height:25.5px;color:#444;-webkit-text-stroke:0.79px;left:990.31px;transform-origin:0 0;transform:scaleX(0.9394);">1.2</span>
<span class="t" style="top:138.44px;font-size:25px;line-height:25px;color:#252423;left:1086.48px;transform-origin:0 0;transform:scaleX(1.0201);">Conditional</span>
<span class="t" style="top:176.94px;font-size:25px;line-height:25px;color:#252423;left:1077.96px;transform-origin:0 0;transform:scaleX(1.0186);">Formatting</span>
<span class="t" style="top:138.44px;font-size:25px;line-height:25px;color:#252423;left:1233.00px;transform-origin:0 0;transform:scaleX(0.9860);">Totals</span>
<span class="t" style="top:138.44px;font-size:25px;line-height:25px;color:#252423;left:1310.60px;transform-origin:0 0;transform:scaleX(0.9626);">Top n</span>
<span class="t" style="top:138.44px;font-size:25px;line-height:25px;color:#252423;left:1386.51px;transform-origin:0 0;">Explorer</span>
<span class="t" style="top:138.44px;font-size:25px;line-height:25px;color:#252423;left:1496.53px;transform-origin:0 0;transform:scaleX(0.9687);">Sort</span>
<span class="t" style="top:135.94px;font-size:25px;line-height:25px;color:#252423;left:1679.94px;transform-origin:0 0;transform:scaleX(0.9808);">Notes</span>
<span class="t" style="top:102.76px;font-size:25.5px;line-height:25.5px;color:#252423;left:1841.25px;transform-origin:0 0;transform:scaleX(0.9548);">Templates</span>
<span class="t" style="top:168.01px;font-size:25.5px;line-height:25.5px;color:#252423;left:1843.06px;transform-origin:0 0;transform:scaleX(0.9404);">Settings</span>
<span class="t" style="top:292.68px;font-size:25.3px;line-height:25.3px;color:#333;left:45.87px;transform-origin:0 0;transform:scaleX(1.0159);">Margin,</span>
<span class="t" style="top:292.68px;font-size:25.3px;line-height:25.3px;color:#333;left:135.22px;transform-origin:0 0;transform:scaleX(0.9399);">Revenue,</span>
<span class="t" style="top:292.68px;font-size:25.3px;line-height:25.3px;color:#333;left:241.80px;transform-origin:0 0;transform:scaleX(0.9037);">Sales,</span>
<span class="t" style="top:292.68px;font-size:25.3px;line-height:25.3px;color:#333;left:311.10px;transform-origin:0 0;transform:scaleX(1.0132);">Total</span>
<span class="t" style="top:292.68px;font-size:25.3px;line-height:25.3px;color:#333;left:370.24px;transform-origin:0 0;transform:scaleX(0.9636);">Customers,</span>
<span class="t" style="top:292.68px;font-size:25.3px;line-height:25.3px;color:#333;left:499.46px;transform-origin:0 0;transform:scaleX(1.0374);">Unit</span>
<span class="t" style="top:292.68px;font-size:25.3px;line-height:25.3px;color:#333;left:551.77px;transform-origin:0 0;transform:scaleX(0.9631);">Price,</span>
<span class="t" style="top:292.68px;font-size:25.3px;line-height:25.3px;color:#333;left:618.77px;transform-origin:0 0;transform:scaleX(0.9252);">Units</span>
<span class="t" style="top:292.68px;font-size:25.3px;line-height:25.3px;color:#333;left:678.05px;transform-origin:0 0;transform:scaleX(1.0472);">by</span>
<span class="t" style="top:292.68px;font-size:25.3px;line-height:25.3px;color:#333;left:712.98px;transform-origin:0 0;transform:scaleX(1.0243);">Country,</span>
<span class="t" style="top:292.68px;font-size:25.3px;line-height:25.3px;color:#333;left:813.53px;transform-origin:0 0;transform:scaleX(0.9706);">Category</span>
<span class="t" style="top:401.98px;font-size:24.6px;line-height:24.6px;color:#252423;left:70.19px;transform-origin:0 0;transform:scaleX(1.0091);">Country</span>
<span class="t" style="top:389.28px;font-size:24.6px;line-height:24.6px;color:#252423;right:2089.91px;transform-origin:100% 0;transform:scaleX(1.0173);">Margin</span>
<span class="t" style="top:421.85px;font-size:19.2px;line-height:19.2px;color:#252423;right:2089.39px;transform-origin:100% 0;transform:scaleX(1.0299);">in Thousands</span>
<span class="t" style="top:389.28px;font-size:24.6px;line-height:24.6px;color:#252423;right:1922.06px;transform-origin:100% 0;transform:scaleX(0.9502);">Revenue</span>
<span class="t" style="top:421.85px;font-size:19.2px;line-height:19.2px;color:#252423;right:1921.44px;transform-origin:100% 0;transform:scaleX(1.1132);">in Millions</span>
<span class="t" style="top:389.28px;font-size:24.6px;line-height:24.6px;color:#252423;right:1754.24px;transform-origin:100% 0;transform:scaleX(0.8925);">Sales</span>
<span class="t" style="top:421.85px;font-size:19.2px;line-height:19.2px;color:#252423;right:1753.24px;transform-origin:100% 0;transform:scaleX(1.1193);">in Millions</span>
<span class="t" style="top:386.53px;font-size:24.6px;line-height:24.6px;color:#252423;right:1585.29px;transform-origin:100% 0;transform:scaleX(1.0300);">Total</span>
<span class="t" style="top:418.03px;font-size:24.6px;line-height:24.6px;color:#252423;right:1586.21px;transform-origin:100% 0;transform:scaleX(0.9715);">Customers</span>
<span class="t" style="top:389.28px;font-size:24.6px;line-height:24.6px;color:#252423;right:1418.72px;transform-origin:100% 0;">Unit Price</span>
<span class="t" style="top:421.85px;font-size:19.2px;line-height:19.2px;color:#252423;right:1418.19px;transform-origin:100% 0;transform:scaleX(1.0343);">in Thousands</span>
<span class="t" style="top:389.28px;font-size:24.6px;line-height:24.6px;color:#252423;right:1251.21px;transform-origin:100% 0;transform:scaleX(0.9911);">Units</span>
<span class="t" style="top:421.85px;font-size:19.2px;line-height:19.2px;color:#252423;right:1250.29px;transform-origin:100% 0;transform:scaleX(1.0321);">in Thousands</span>
<span class="t" style="top:389.28px;font-size:24.6px;line-height:24.6px;color:#252423;right:1083.36px;transform-origin:100% 0;transform:scaleX(0.9483);">Sales - S2</span>
<span class="t" style="top:421.85px;font-size:19.2px;line-height:19.2px;color:#252423;right:1082.73px;transform-origin:100% 0;transform:scaleX(1.1223);">in Millions</span>
<span class="t" style="top:389.28px;font-size:24.6px;line-height:24.6px;color:#252423;right:915.86px;transform-origin:100% 0;transform:scaleX(0.9483);">Sales - S3</span>
<span class="t" style="top:421.85px;font-size:19.2px;line-height:19.2px;color:#252423;right:915.23px;transform-origin:100% 0;transform:scaleX(1.1223);">in Millions</span>
<span class="t" style="top:373.53px;font-size:24.6px;line-height:24.6px;color:#252423;right:747.61px;transform-origin:100% 0;transform:scaleX(0.9477);">Average</span>
<span class="t" style="top:404.78px;font-size:24.6px;line-height:24.6px;color:#252423;right:747.99px;transform-origin:100% 0;transform:scaleX(0.8925);">Sales</span>
<span class="t" style="top:436.35px;font-size:19.2px;line-height:19.2px;color:#252423;right:747.08px;transform-origin:100% 0;transform:scaleX(1.1253);">in Millions</span>
<span class="t" style="top:406.08px;font-size:14.2px;line-height:14.2px;color:#444;left:1429.46px;transform-origin:0 0;transform:scaleX(1.0355);">1.2</span>
<span class="t" style="top:406.08px;font-size:14.2px;line-height:14.2px;color:#444;left:1596.96px;transform-origin:0 0;transform:scaleX(1.0355);">1.2</span>
<span class="t" style="top:485.21px;font-size:24.8px;line-height:24.8px;color:#1a1a1a;font-weight:700;left:77.40px;transform-origin:0 0;transform:scaleX(0.9904);">All</span>
<span class="t m" style="top:486.82px;font-size:22.9px;line-height:22.9px;color:#1a1a1a;font-weight:700;letter-spacing:-0.22px;right:2089.50px;transform-origin:100% 0;">14,708.06</span>
<span class="t m" style="top:486.82px;font-size:22.9px;line-height:22.9px;color:#1a1a1a;font-weight:700;letter-spacing:-0.22px;right:1922.30px;transform-origin:100% 0;">31.11</span>
<span class="t m" style="top:486.82px;font-size:22.9px;line-height:22.9px;color:#1a1a1a;font-weight:700;letter-spacing:-0.22px;right:1754.70px;transform-origin:100% 0;">31.11</span>
<span class="t m" style="top:486.82px;font-size:22.9px;line-height:22.9px;color:#1a1a1a;font-weight:700;letter-spacing:-0.22px;right:1586.50px;transform-origin:100% 0;">7,768.00</span>
<span class="t m" style="top:486.82px;font-size:22.9px;line-height:22.9px;color:#1a1a1a;font-weight:700;letter-spacing:-0.22px;right:1419.10px;transform-origin:100% 0;">13,583.22</span>
<span class="t m" style="top:486.82px;font-size:22.9px;line-height:22.9px;color:#1a1a1a;font-weight:700;letter-spacing:-0.22px;right:1251.60px;transform-origin:100% 0;">116.61</span>
<span class="t m" style="top:486.82px;font-size:22.9px;line-height:22.9px;color:#1a1a1a;font-weight:700;letter-spacing:-0.22px;right:1084.00px;transform-origin:100% 0;">35.68</span>
<span class="t m" style="top:486.82px;font-size:22.9px;line-height:22.9px;color:#1a1a1a;font-weight:700;letter-spacing:-0.22px;right:915.80px;transform-origin:100% 0;">32.46</span>
<span class="t m" style="top:486.82px;font-size:22.9px;line-height:22.9px;color:#1a1a1a;font-weight:700;letter-spacing:-0.22px;right:747.20px;transform-origin:100% 0;">33.08</span>
<span class="t" style="top:535.11px;font-size:24.8px;line-height:24.8px;color:#1a1a1a;font-weight:700;left:77.40px;transform-origin:0 0;transform:scaleX(0.8973);">Australia</span>
<span class="t m" style="top:536.72px;font-size:22.9px;line-height:22.9px;color:#1a1a1a;font-weight:700;letter-spacing:-0.22px;right:2089.50px;transform-origin:100% 0;">1,694.28</span>
<span class="t m" style="top:536.72px;font-size:22.9px;line-height:22.9px;color:#1a1a1a;font-weight:700;letter-spacing:-0.22px;right:1922.30px;transform-origin:100% 0;">3.68</span>
<span class="t m" style="top:536.72px;font-size:22.9px;line-height:22.9px;color:#1a1a1a;font-weight:700;letter-spacing:-0.22px;right:1754.70px;transform-origin:100% 0;">3.68</span>
<span class="t m" style="top:536.72px;font-size:22.9px;line-height:22.9px;color:#1a1a1a;font-weight:700;letter-spacing:-0.22px;right:1586.50px;transform-origin:100% 0;">2,061.00</span>
<span class="t m" style="top:536.72px;font-size:22.9px;line-height:22.9px;color:#1a1a1a;font-weight:700;letter-spacing:-0.22px;right:1419.10px;transform-origin:100% 0;">1,771.20</span>
<span class="t m" style="top:536.72px;font-size:22.9px;line-height:22.9px;color:#1a1a1a;font-weight:700;letter-spacing:-0.22px;right:1251.60px;transform-origin:100% 0;">15.10</span>
<span class="t m" style="top:536.72px;font-size:22.9px;line-height:22.9px;color:#1a1a1a;font-weight:700;letter-spacing:-0.22px;right:1084.00px;transform-origin:100% 0;">4.23</span>
<span class="t m" style="top:536.72px;font-size:22.9px;line-height:22.9px;color:#1a1a1a;font-weight:700;letter-spacing:-0.22px;right:915.80px;transform-origin:100% 0;">3.84</span>
<span class="t m" style="top:536.72px;font-size:22.9px;line-height:22.9px;color:#1a1a1a;font-weight:700;letter-spacing:-0.22px;right:747.20px;transform-origin:100% 0;">3.92</span>
<span class="t" style="top:572.25px;font-size:24.4px;line-height:24.4px;color:#1f1f1f;left:88.00px;transform-origin:0 0;transform:scaleX(0.9949);">Audio</span>
<span class="t m" style="top:573.52px;font-size:22.9px;line-height:22.9px;color:#222;letter-spacing:-0.22px;right:2089.50px;transform-origin:100% 0;">99.46</span>
<span class="t m" style="top:573.52px;font-size:22.9px;line-height:22.9px;color:#222;letter-spacing:-0.22px;right:1922.30px;transform-origin:100% 0;">0.10</span>
<span class="t m" style="top:573.52px;font-size:22.9px;line-height:22.9px;color:#222;letter-spacing:-0.22px;right:1754.70px;transform-origin:100% 0;">0.10</span>
<span class="t m" style="top:573.52px;font-size:22.9px;line-height:22.9px;color:#222;letter-spacing:-0.22px;right:1586.50px;transform-origin:100% 0;">227.00</span>
<span class="t m" style="top:573.52px;font-size:22.9px;line-height:22.9px;color:#222;letter-spacing:-0.22px;right:1419.10px;transform-origin:100% 0;">42.82</span>
<span class="t m" style="top:573.52px;font-size:22.9px;line-height:22.9px;color:#222;letter-spacing:-0.22px;right:1251.60px;transform-origin:100% 0;">0.95</span>
<span class="t m" style="top:573.52px;font-size:22.9px;line-height:22.9px;color:#222;letter-spacing:-0.22px;right:1084.00px;transform-origin:100% 0;">0.11</span>
<span class="t m" style="top:573.52px;font-size:22.9px;line-height:22.9px;color:#222;letter-spacing:-0.22px;right:915.80px;transform-origin:100% 0;">0.10</span>
<span class="t m" style="top:573.52px;font-size:22.9px;line-height:22.9px;color:#222;letter-spacing:-0.22px;right:747.20px;transform-origin:100% 0;">0.11</span>
<span class="t" style="top:609.93px;font-size:24.4px;line-height:24.4px;color:#1f1f1f;left:87.03px;transform-origin:0 0;transform:scaleX(0.9698);">Cameras and camcord...</span>
<span class="t m" style="top:611.20px;font-size:22.9px;line-height:22.9px;color:#222;letter-spacing:-0.22px;right:2089.50px;transform-origin:100% 0;">412.46</span>
<span class="t m" style="top:611.20px;font-size:22.9px;line-height:22.9px;color:#222;letter-spacing:-0.22px;right:1922.30px;transform-origin:100% 0;">0.41</span>
<span class="t m" style="top:611.20px;font-size:22.9px;line-height:22.9px;color:#222;letter-spacing:-0.22px;right:1754.70px;transform-origin:100% 0;">0.41</span>
<span class="t m" style="top:611.20px;font-size:22.9px;line-height:22.9px;color:#222;letter-spacing:-0.22px;right:1586.50px;transform-origin:100% 0;">322.00</span>
<span class="t m" style="top:611.20px;font-size:22.9px;line-height:22.9px;color:#222;letter-spacing:-0.22px;right:1419.10px;transform-origin:100% 0;">221.44</span>
<span class="t m" style="top:611.20px;font-size:22.9px;line-height:22.9px;color:#222;letter-spacing:-0.22px;right:1251.60px;transform-origin:100% 0;">1.74</span>
<span class="t m" style="top:611.20px;font-size:22.9px;line-height:22.9px;color:#222;letter-spacing:-0.22px;right:1084.00px;transform-origin:100% 0;">0.47</span>
<span class="t m" style="top:611.20px;font-size:22.9px;line-height:22.9px;color:#222;letter-spacing:-0.22px;right:915.80px;transform-origin:100% 0;">0.43</span>
<span class="t m" style="top:611.20px;font-size:22.9px;line-height:22.9px;color:#222;letter-spacing:-0.22px;right:747.20px;transform-origin:100% 0;">0.44</span>
<span class="t" style="top:647.61px;font-size:24.4px;line-height:24.4px;color:#1f1f1f;left:87.00px;transform-origin:0 0;transform:scaleX(0.9952);">Cell phones</span>
<span class="t m" style="top:648.88px;font-size:22.9px;line-height:22.9px;color:#222;letter-spacing:-0.22px;right:2089.50px;transform-origin:100% 0;">124.08</span>
<span class="t m" style="top:648.88px;font-size:22.9px;line-height:22.9px;color:#222;letter-spacing:-0.22px;right:1922.30px;transform-origin:100% 0;">0.12</span>
<span class="t m" style="top:648.88px;font-size:22.9px;line-height:22.9px;color:#222;letter-spacing:-0.22px;right:1754.70px;transform-origin:100% 0;">0.12</span>
<span class="t m" style="top:648.88px;font-size:22.9px;line-height:22.9px;color:#222;letter-spacing:-0.22px;right:1586.50px;transform-origin:100% 0;">198.00</span>
<span class="t m" style="top:648.88px;font-size:22.9px;line-height:22.9px;color:#222;letter-spacing:-0.22px;right:1419.10px;transform-origin:100% 0;">71.42</span>
<span class="t m" style="top:648.88px;font-size:22.9px;line-height:22.9px;color:#222;letter-spacing:-0.22px;right:1251.60px;transform-origin:100% 0;">1.24</span>
<span class="t m" style="top:648.88px;font-size:22.9px;line-height:22.9px;color:#222;letter-spacing:-0.22px;right:1084.00px;transform-origin:100% 0;">0.14</span>
<span class="t m" style="top:648.88px;font-size:22.9px;line-height:22.9px;color:#222;letter-spacing:-0.22px;right:915.80px;transform-origin:100% 0;">0.13</span>
<span class="t m" style="top:648.88px;font-size:22.9px;line-height:22.9px;color:#222;letter-spacing:-0.22px;right:747.20px;transform-origin:100% 0;">0.13</span>
<span class="t" style="top:685.29px;font-size:24.4px;line-height:24.4px;color:#1f1f1f;left:87.00px;transform-origin:0 0;">Computers</span>
<span class="t m" style="top:686.56px;font-size:22.9px;line-height:22.9px;color:#222;letter-spacing:-0.22px;right:2089.50px;transform-origin:100% 0;">290.03</span>
<span class="t m" style="top:686.56px;font-size:22.9px;line-height:22.9px;color:#222;letter-spacing:-0.22px;right:1922.30px;transform-origin:100% 0;">1.53</span>
<span class="t m" style="top:686.56px;font-size:22.9px;line-height:22.9px;color:#222;letter-spacing:-0.22px;right:1754.70px;transform-origin:100% 0;">1.53</span>
<span class="t m" style="top:686.56px;font-size:22.9px;line-height:22.9px;color:#222;letter-spacing:-0.22px;right:1586.50px;transform-origin:100% 0;">1,232.00</span>
<span class="t m" style="top:686.56px;font-size:22.9px;line-height:22.9px;color:#222;letter-spacing:-0.22px;right:1419.10px;transform-origin:100% 0;">632.62</span>
<span class="t m" style="top:686.56px;font-size:22.9px;line-height:22.9px;color:#222;letter-spacing:-0.22px;right:1251.60px;transform-origin:100% 0;">5.58</span>
<span class="t m" style="top:686.56px;font-size:22.9px;line-height:22.9px;color:#222;letter-spacing:-0.22px;right:1084.00px;transform-origin:100% 0;">1.75</span>
<span class="t m" style="top:686.56px;font-size:22.9px;line-height:22.9px;color:#222;letter-spacing:-0.22px;right:915.80px;transform-origin:100% 0;">1.59</span>
<span class="t m" style="top:686.56px;font-size:22.9px;line-height:22.9px;color:#222;letter-spacing:-0.22px;right:747.20px;transform-origin:100% 0;">1.62</span>
<span class="t" style="top:722.97px;font-size:24.4px;line-height:24.4px;color:#1f1f1f;left:87.05px;transform-origin:0 0;transform:scaleX(0.9532);">Games and Toys</span>
<span class="t m" style="top:724.24px;font-size:22.9px;line-height:22.9px;color:#222;letter-spacing:-0.22px;right:2089.50px;transform-origin:100% 0;">16.77</span>
<span class="t m" style="top:724.24px;font-size:22.9px;line-height:22.9px;color:#222;letter-spacing:-0.22px;right:1922.30px;transform-origin:100% 0;">0.02</span>
<span class="t m" style="top:724.24px;font-size:22.9px;line-height:22.9px;color:#222;letter-spacing:-0.22px;right:1754.70px;transform-origin:100% 0;">0.02</span>
<span class="t m" style="top:724.24px;font-size:22.9px;line-height:22.9px;color:#222;letter-spacing:-0.22px;right:1586.50px;transform-origin:100% 0;">108.00</span>
<span class="t m" style="top:724.24px;font-size:22.9px;line-height:22.9px;color:#222;letter-spacing:-0.22px;right:1419.10px;transform-origin:100% 0;">9.58</span>
<span class="t m" style="top:724.24px;font-size:22.9px;line-height:22.9px;color:#222;letter-spacing:-0.22px;right:1251.60px;transform-origin:100% 0;">0.72</span>
<span class="t m" style="top:724.24px;font-size:22.9px;line-height:22.9px;color:#222;letter-spacing:-0.22px;right:1084.00px;transform-origin:100% 0;">0.02</span>
<span class="t m" style="top:724.24px;font-size:22.9px;line-height:22.9px;color:#222;letter-spacing:-0.22px;right:915.80px;transform-origin:100% 0;">0.02</span>
<span class="t m" style="top:724.24px;font-size:22.9px;line-height:22.9px;color:#222;letter-spacing:-0.22px;right:747.20px;transform-origin:100% 0;">0</span>
<span class="t" style="top:760.65px;font-size:24.4px;line-height:24.4px;color:#1f1f1f;left:86.00px;transform-origin:0 0;">Home Appliances</span>
<span class="t m" style="top:761.92px;font-size:22.9px;line-height:22.9px;color:#222;letter-spacing:-0.22px;right:2089.50px;transform-origin:100% 0;">74.59</span>
<span class="t m" style="top:761.92px;font-size:22.9px;line-height:22.9px;color:#222;letter-spacing:-0.22px;right:1922.30px;transform-origin:100% 0;">0.83</span>
<span class="t m" style="top:761.92px;font-size:22.9px;line-height:22.9px;color:#222;letter-spacing:-0.22px;right:1754.70px;transform-origin:100% 0;">0.83</span>
<span class="t m" style="top:761.92px;font-size:22.9px;line-height:22.9px;color:#222;letter-spacing:-0.22px;right:1586.50px;transform-origin:100% 0;">434.00</span>
<span class="t m" style="top:761.92px;font-size:22.9px;line-height:22.9px;color:#222;letter-spacing:-0.22px;right:1419.10px;transform-origin:100% 0;">491.77</span>
<span class="t m" style="top:761.92px;font-size:22.9px;line-height:22.9px;color:#222;letter-spacing:-0.22px;right:1251.60px;transform-origin:100% 0;">2.66</span>
<span class="t m" style="top:761.92px;font-size:22.9px;line-height:22.9px;color:#222;letter-spacing:-0.22px;right:1084.00px;transform-origin:100% 0;">0.95</span>
<span class="t m" style="top:761.92px;font-size:22.9px;line-height:22.9px;color:#222;letter-spacing:-0.22px;right:915.80px;transform-origin:100% 0;">0.86</span>
<span class="t m" style="top:761.92px;font-size:22.9px;line-height:22.9px;color:#222;letter-spacing:-0.22px;right:747.20px;transform-origin:100% 0;">0.88</span>
<span class="t" style="top:798.33px;font-size:24.4px;line-height:24.4px;color:#1f1f1f;left:86.05px;transform-origin:0 0;transform:scaleX(0.9760);">Music, Movies and Au...</span>
<span class="t m" style="top:799.60px;font-size:22.9px;line-height:22.9px;color:#222;letter-spacing:-0.22px;right:2089.50px;transform-origin:100% 0;">24.31</span>
<span class="t m" style="top:799.60px;font-size:22.9px;line-height:22.9px;color:#222;letter-spacing:-0.22px;right:1922.30px;transform-origin:100% 0;">0.02</span>
<span class="t m" style="top:799.60px;font-size:22.9px;line-height:22.9px;color:#222;letter-spacing:-0.22px;right:1754.70px;transform-origin:100% 0;">0.02</span>
<span class="t m" style="top:799.60px;font-size:22.9px;line-height:22.9px;color:#222;letter-spacing:-0.22px;right:1586.50px;transform-origin:100% 0;">72.00</span>
<span class="t m" style="top:799.60px;font-size:22.9px;line-height:22.9px;color:#222;letter-spacing:-0.22px;right:1419.10px;transform-origin:100% 0;">13.53</span>
<span class="t m" style="top:799.60px;font-size:22.9px;line-height:22.9px;color:#222;letter-spacing:-0.22px;right:1251.60px;transform-origin:100% 0;">0.36</span>
<span class="t m" style="top:799.60px;font-size:22.9px;line-height:22.9px;color:#222;letter-spacing:-0.22px;right:1084.00px;transform-origin:100% 0;">0.03</span>
<span class="t m" style="top:799.60px;font-size:22.9px;line-height:22.9px;color:#222;letter-spacing:-0.22px;right:915.80px;transform-origin:100% 0;">0.03</span>
<span class="t m" style="top:799.60px;font-size:22.9px;line-height:22.9px;color:#222;letter-spacing:-0.22px;right:747.20px;transform-origin:100% 0;">0</span>
<span class="t" style="top:836.01px;font-size:24.4px;line-height:24.4px;color:#1f1f1f;left:88.00px;transform-origin:0 0;transform:scaleX(0.9810);">TV and Video</span>
<span class="t m" style="top:837.28px;font-size:22.9px;line-height:22.9px;color:#222;letter-spacing:-0.22px;right:2089.50px;transform-origin:100% 0;">652.59</span>
<span class="t m" style="top:837.28px;font-size:22.9px;line-height:22.9px;color:#222;letter-spacing:-0.22px;right:1922.30px;transform-origin:100% 0;">0.65</span>
<span class="t m" style="top:837.28px;font-size:22.9px;line-height:22.9px;color:#222;letter-spacing:-0.22px;right:1754.70px;transform-origin:100% 0;">0.65</span>
<span class="t m" style="top:837.28px;font-size:22.9px;line-height:22.9px;color:#222;letter-spacing:-0.22px;right:1586.50px;transform-origin:100% 0;">436.00</span>
<span class="t m" style="top:837.28px;font-size:22.9px;line-height:22.9px;color:#222;letter-spacing:-0.22px;right:1419.10px;transform-origin:100% 0;">288.01</span>
<span class="t m" style="top:837.28px;font-size:22.9px;line-height:22.9px;color:#222;letter-spacing:-0.22px;right:1251.60px;transform-origin:100% 0;">1.86</span>
<span class="t m" style="top:837.28px;font-size:22.9px;line-height:22.9px;color:#222;letter-spacing:-0.22px;right:1084.00px;transform-origin:100% 0;">0.75</span>
<span class="t m" style="top:837.28px;font-size:22.9px;line-height:22.9px;color:#222;letter-spacing:-0.22px;right:915.80px;transform-origin:100% 0;">0.68</span>
<span class="t m" style="top:837.28px;font-size:22.9px;line-height:22.9px;color:#222;letter-spacing:-0.22px;right:747.20px;transform-origin:100% 0;">0.69</span>
<span class="t" style="top:876.15px;font-size:24.8px;line-height:24.8px;color:#1a1a1a;font-weight:700;left:76.49px;transform-origin:0 0;transform:scaleX(0.9067);">Canada</span>
<span class="t m" style="top:877.76px;font-size:22.9px;line-height:22.9px;color:#1a1a1a;font-weight:700;letter-spacing:-0.22px;right:2089.50px;transform-origin:100% 0;">2,041.82</span>
<span class="t m" style="top:877.76px;font-size:22.9px;line-height:22.9px;color:#1a1a1a;font-weight:700;letter-spacing:-0.22px;right:1922.30px;transform-origin:100% 0;">4.38</span>
<span class="t m" style="top:877.76px;font-size:22.9px;line-height:22.9px;color:#1a1a1a;font-weight:700;letter-spacing:-0.22px;right:1754.70px;transform-origin:100% 0;">4.38</span>
<span class="t m" style="top:877.76px;font-size:22.9px;line-height:22.9px;color:#1a1a1a;font-weight:700;letter-spacing:-0.22px;right:1586.50px;transform-origin:100% 0;">611.00</span>
<span class="t m" style="top:877.76px;font-size:22.9px;line-height:22.9px;color:#1a1a1a;font-weight:700;letter-spacing:-0.22px;right:1419.10px;transform-origin:100% 0;">1,798.34</span>
<span class="t m" style="top:877.76px;font-size:22.9px;line-height:22.9px;color:#1a1a1a;font-weight:700;letter-spacing:-0.22px;right:1251.60px;transform-origin:100% 0;">15.72</span>
<span class="t m" style="top:877.76px;font-size:22.9px;line-height:22.9px;color:#1a1a1a;font-weight:700;letter-spacing:-0.22px;right:1084.00px;transform-origin:100% 0;">5.02</span>
<span class="t m" style="top:877.76px;font-size:22.9px;line-height:22.9px;color:#1a1a1a;font-weight:700;letter-spacing:-0.22px;right:915.80px;transform-origin:100% 0;">4.57</span>
<span class="t m" style="top:877.76px;font-size:22.9px;line-height:22.9px;color:#1a1a1a;font-weight:700;letter-spacing:-0.22px;right:747.20px;transform-origin:100% 0;">4.66</span>
<span class="t" style="top:913.59px;font-size:24.4px;line-height:24.4px;color:#1f1f1f;left:88.00px;transform-origin:0 0;transform:scaleX(0.9949);">Audio</span>
<span class="t m" style="top:914.86px;font-size:22.9px;line-height:22.9px;color:#222;letter-spacing:-0.22px;right:2089.50px;transform-origin:100% 0;">158.38</span>
<span class="t m" style="top:914.86px;font-size:22.9px;line-height:22.9px;color:#222;letter-spacing:-0.22px;right:1922.30px;transform-origin:100% 0;">0.16</span>
<span class="t m" style="top:914.86px;font-size:22.9px;line-height:22.9px;color:#222;letter-spacing:-0.22px;right:1754.70px;transform-origin:100% 0;">0.16</span>
<span class="t m" style="top:914.86px;font-size:22.9px;line-height:22.9px;color:#222;letter-spacing:-0.22px;right:1586.50px;transform-origin:100% 0;">114.00</span>
<span class="t m" style="top:914.86px;font-size:22.9px;line-height:22.9px;color:#222;letter-spacing:-0.22px;right:1419.10px;transform-origin:100% 0;">58.67</span>
<span class="t m" style="top:914.86px;font-size:22.9px;line-height:22.9px;color:#222;letter-spacing:-0.22px;right:1251.60px;transform-origin:100% 0;">1.29</span>
<span class="t m" style="top:914.86px;font-size:22.9px;line-height:22.9px;color:#222;letter-spacing:-0.22px;right:1084.00px;transform-origin:100% 0;">0.18</span>
<span class="t m" style="top:914.86px;font-size:22.9px;line-height:22.9px;color:#222;letter-spacing:-0.22px;right:915.80px;transform-origin:100% 0;">0.17</span>
<span class="t m" style="top:914.86px;font-size:22.9px;line-height:22.9px;color:#222;letter-spacing:-0.22px;right:747.20px;transform-origin:100% 0;">0.17</span>
<span class="t" style="top:951.27px;font-size:24.4px;line-height:24.4px;color:#1f1f1f;left:87.03px;transform-origin:0 0;transform:scaleX(0.9698);">Cameras and camcord...</span>
<span class="t m" style="top:952.54px;font-size:22.9px;line-height:22.9px;color:#222;letter-spacing:-0.22px;right:2089.50px;transform-origin:100% 0;">380.94</span>
<span class="t m" style="top:952.54px;font-size:22.9px;line-height:22.9px;color:#222;letter-spacing:-0.22px;right:1922.30px;transform-origin:100% 0;">0.38</span>
<span class="t m" style="top:952.54px;font-size:22.9px;line-height:22.9px;color:#222;letter-spacing:-0.22px;right:1754.70px;transform-origin:100% 0;">0.38</span>
<span class="t m" style="top:952.54px;font-size:22.9px;line-height:22.9px;color:#222;letter-spacing:-0.22px;right:1586.50px;transform-origin:100% 0;">123.00</span>
<span class="t m" style="top:952.54px;font-size:22.9px;line-height:22.9px;color:#222;letter-spacing:-0.22px;right:1419.10px;transform-origin:100% 0;">182.88</span>
<span class="t m" style="top:952.54px;font-size:22.9px;line-height:22.9px;color:#222;letter-spacing:-0.22px;right:1251.60px;transform-origin:100% 0;">1.58</span>
<span class="t m" style="top:952.54px;font-size:22.9px;line-height:22.9px;color:#222;letter-spacing:-0.22px;right:1084.00px;transform-origin:100% 0;">0.44</span>
<span class="t m" style="top:952.54px;font-size:22.9px;line-height:22.9px;color:#222;letter-spacing:-0.22px;right:915.80px;transform-origin:100% 0;">0.40</span>
<span class="t m" style="top:952.54px;font-size:22.9px;line-height:22.9px;color:#222;letter-spacing:-0.22px;right:747.20px;transform-origin:100% 0;">0.41</span>
<span class="t" style="top:988.95px;font-size:24.4px;line-height:24.4px;color:#1f1f1f;left:87.00px;transform-origin:0 0;transform:scaleX(0.9952);">Cell phones</span>
<span class="t m" style="top:990.22px;font-size:22.9px;line-height:22.9px;color:#222;letter-spacing:-0.22px;right:2089.50px;transform-origin:100% 0;">101.35</span>
<span class="t m" style="top:990.22px;font-size:22.9px;line-height:22.9px;color:#222;letter-spacing:-0.22px;right:1922.30px;transform-origin:100% 0;">0.10</span>
<span class="t m" style="top:990.22px;font-size:22.9px;line-height:22.9px;color:#222;letter-spacing:-0.22px;right:1754.70px;transform-origin:100% 0;">0.10</span>
<span class="t m" style="top:990.22px;font-size:22.9px;line-height:22.9px;color:#222;letter-spacing:-0.22px;right:1586.50px;transform-origin:100% 0;">82.00</span>
<span class="t m" style="top:990.22px;font-size:22.9px;line-height:22.9px;color:#222;letter-spacing:-0.22px;right:1419.10px;transform-origin:100% 0;">51.51</span>
<span class="t m" style="top:990.22px;font-size:22.9px;line-height:22.9px;color:#222;letter-spacing:-0.22px;right:1251.60px;transform-origin:100% 0;">0.88</span>
<span class="t m" style="top:990.22px;font-size:22.9px;line-height:22.9px;color:#222;letter-spacing:-0.22px;right:1084.00px;transform-origin:100% 0;">0.12</span>
<span class="t m" style="top:990.22px;font-size:22.9px;line-height:22.9px;color:#222;letter-spacing:-0.22px;right:915.80px;transform-origin:100% 0;">0.11</span>
<span class="t m" style="top:990.22px;font-size:22.9px;line-height:22.9px;color:#222;letter-spacing:-0.22px;right:747.20px;transform-origin:100% 0;">0.11</span>
<span class="t" style="top:1026.63px;font-size:24.4px;line-height:24.4px;color:#1f1f1f;left:87.00px;transform-origin:0 0;">Computers</span>
<span class="t m" style="top:1027.90px;font-size:22.9px;line-height:22.9px;color:#222;letter-spacing:-0.22px;right:2089.50px;transform-origin:100% 0;">291.62</span>
<span class="t m" style="top:1027.90px;font-size:22.9px;line-height:22.9px;color:#222;letter-spacing:-0.22px;right:1922.30px;transform-origin:100% 0;">1.95</span>
<span class="t m" style="top:1027.90px;font-size:22.9px;line-height:22.9px;color:#222;letter-spacing:-0.22px;right:1754.70px;transform-origin:100% 0;">1.95</span>
<span class="t m" style="top:1027.90px;font-size:22.9px;line-height:22.9px;color:#222;letter-spacing:-0.22px;right:1586.50px;transform-origin:100% 0;">335.00</span>
<span class="t m" style="top:1027.90px;font-size:22.9px;line-height:22.9px;color:#222;letter-spacing:-0.22px;right:1419.10px;transform-origin:100% 0;">721.89</span>
<span class="t m" style="top:1027.90px;font-size:22.9px;line-height:22.9px;color:#222;letter-spacing:-0.22px;right:1251.60px;transform-origin:100% 0;">6.63</span>
<span class="t m" style="top:1027.90px;font-size:22.9px;line-height:22.9px;color:#222;letter-spacing:-0.22px;right:1084.00px;transform-origin:100% 0;">2.24</span>
<span class="t m" style="top:1027.90px;font-size:22.9px;line-height:22.9px;color:#222;letter-spacing:-0.22px;right:915.80px;transform-origin:100% 0;">2.04</span>
<span class="t m" style="top:1027.90px;font-size:22.9px;line-height:22.9px;color:#222;letter-spacing:-0.22px;right:747.20px;transform-origin:100% 0;">2.08</span>
<span class="t" style="top:1064.31px;font-size:24.4px;line-height:24.4px;color:#1f1f1f;left:87.05px;transform-origin:0 0;transform:scaleX(0.9532);">Games and Toys</span>
<span class="t m" style="top:1065.58px;font-size:22.9px;line-height:22.9px;color:#222;letter-spacing:-0.22px;right:2089.50px;transform-origin:100% 0;">16.05</span>
<span class="t m" style="top:1065.58px;font-size:22.9px;line-height:22.9px;color:#222;letter-spacing:-0.22px;right:1922.30px;transform-origin:100% 0;">0.02</span>
<span class="t m" style="top:1065.58px;font-size:22.9px;line-height:22.9px;color:#222;letter-spacing:-0.22px;right:1754.70px;transform-origin:100% 0;">0.02</span>
<span class="t m" style="top:1065.58px;font-size:22.9px;line-height:22.9px;color:#222;letter-spacing:-0.22px;right:1586.50px;transform-origin:100% 0;">60.00</span>
<span class="t m" style="top:1065.58px;font-size:22.9px;line-height:22.9px;color:#222;letter-spacing:-0.22px;right:1419.10px;transform-origin:100% 0;">7.69</span>
<span class="t m" style="top:1065.58px;font-size:22.9px;line-height:22.9px;color:#222;letter-spacing:-0.22px;right:1251.60px;transform-origin:100% 0;">0.52</span>
<span class="t m" style="top:1065.58px;font-size:22.9px;line-height:22.9px;color:#222;letter-spacing:-0.22px;right:1084.00px;transform-origin:100% 0;">0.02</span>
<span class="t m" style="top:1065.58px;font-size:22.9px;line-height:22.9px;color:#222;letter-spacing:-0.22px;right:915.80px;transform-origin:100% 0;">0.02</span>
<span class="t m" style="top:1065.58px;font-size:22.9px;line-height:22.9px;color:#222;letter-spacing:-0.22px;right:747.20px;transform-origin:100% 0;">0</span>
<span class="t" style="top:1101.99px;font-size:24.4px;line-height:24.4px;color:#1f1f1f;left:86.00px;transform-origin:0 0;">Home Appliances</span>
<span class="t m" style="top:1103.26px;font-size:22.9px;line-height:22.9px;color:#222;letter-spacing:-0.22px;right:2089.50px;transform-origin:100% 0;">14.08</span>
<span class="t m" style="top:1103.26px;font-size:22.9px;line-height:22.9px;color:#222;letter-spacing:-0.22px;right:1922.30px;transform-origin:100% 0;">0.69</span>
<span class="t m" style="top:1103.26px;font-size:22.9px;line-height:22.9px;color:#222;letter-spacing:-0.22px;right:1754.70px;transform-origin:100% 0;">0.69</span>
<span class="t m" style="top:1103.26px;font-size:22.9px;line-height:22.9px;color:#222;letter-spacing:-0.22px;right:1586.50px;transform-origin:100% 0;">145.00</span>
<span class="t m" style="top:1103.26px;font-size:22.9px;line-height:22.9px;color:#222;letter-spacing:-0.22px;right:1419.10px;transform-origin:100% 0;">356.62</span>
<span class="t m" style="top:1103.26px;font-size:22.9px;line-height:22.9px;color:#222;letter-spacing:-0.22px;right:1251.60px;transform-origin:100% 0;">2.08</span>
<span class="t m" style="top:1103.26px;font-size:22.9px;line-height:22.9px;color:#222;letter-spacing:-0.22px;right:1084.00px;transform-origin:100% 0;">0.79</span>
<span class="t m" style="top:1103.26px;font-size:22.9px;line-height:22.9px;color:#222;letter-spacing:-0.22px;right:915.80px;transform-origin:100% 0;">0.72</span>
<span class="t m" style="top:1103.26px;font-size:22.9px;line-height:22.9px;color:#222;letter-spacing:-0.22px;right:747.20px;transform-origin:100% 0;">0.73</span>
<span class="t" style="top:1139.67px;font-size:24.4px;line-height:24.4px;color:#1f1f1f;left:86.05px;transform-origin:0 0;transform:scaleX(0.9760);">Music, Movies and Au...</span>
<span class="t m" style="top:1140.94px;font-size:22.9px;line-height:22.9px;color:#222;letter-spacing:-0.22px;right:2089.50px;transform-origin:100% 0;">15.27</span>
<span class="t m" style="top:1140.94px;font-size:22.9px;line-height:22.9px;color:#222;letter-spacing:-0.22px;right:1922.30px;transform-origin:100% 0;">0.02</span>
<span class="t m" style="top:1140.94px;font-size:22.9px;line-height:22.9px;color:#222;letter-spacing:-0.22px;right:1754.70px;transform-origin:100% 0;">0.02</span>
<span class="t m" style="top:1140.94px;font-size:22.9px;line-height:22.9px;color:#222;letter-spacing:-0.22px;right:1586.50px;transform-origin:100% 0;">37.00</span>
<span class="t m" style="top:1140.94px;font-size:22.9px;line-height:22.9px;color:#222;letter-spacing:-0.22px;right:1419.10px;transform-origin:100% 0;">7.99</span>
<span class="t m" style="top:1140.94px;font-size:22.9px;line-height:22.9px;color:#222;letter-spacing:-0.22px;right:1251.60px;transform-origin:100% 0;">0.27</span>
<span class="t m" style="top:1140.94px;font-size:22.9px;line-height:22.9px;color:#222;letter-spacing:-0.22px;right:1084.00px;transform-origin:100% 0;">0.02</span>
<span class="t m" style="top:1140.94px;font-size:22.9px;line-height:22.9px;color:#222;letter-spacing:-0.22px;right:915.80px;transform-origin:100% 0;">0.02</span>
<span class="t m" style="top:1140.94px;font-size:22.9px;line-height:22.9px;color:#222;letter-spacing:-0.22px;right:747.20px;transform-origin:100% 0;">0</span>
<span class="t" style="top:1177.35px;font-size:24.4px;line-height:24.4px;color:#1f1f1f;left:88.00px;transform-origin:0 0;transform:scaleX(0.9810);">TV and Video</span>
<span class="t m" style="top:1178.62px;font-size:22.9px;line-height:22.9px;color:#222;letter-spacing:-0.22px;right:2089.50px;transform-origin:100% 0;">1,064.13</span>
<span class="t m" style="top:1178.62px;font-size:22.9px;line-height:22.9px;color:#222;letter-spacing:-0.22px;right:1922.30px;transform-origin:100% 0;">1.06</span>
<span class="t m" style="top:1178.62px;font-size:22.9px;line-height:22.9px;color:#222;letter-spacing:-0.22px;right:1754.70px;transform-origin:100% 0;">1.06</span>
<span class="t m" style="top:1178.62px;font-size:22.9px;line-height:22.9px;color:#222;letter-spacing:-0.22px;right:1586.50px;transform-origin:100% 0;">173.00</span>
<span class="t m" style="top:1178.62px;font-size:22.9px;line-height:22.9px;color:#222;letter-spacing:-0.22px;right:1419.10px;transform-origin:100% 0;">411.10</span>
<span class="t m" style="top:1178.62px;font-size:22.9px;line-height:22.9px;color:#222;letter-spacing:-0.22px;right:1251.60px;transform-origin:100% 0;">2.47</span>
<span class="t m" style="top:1178.62px;font-size:22.9px;line-height:22.9px;color:#222;letter-spacing:-0.22px;right:1084.00px;transform-origin:100% 0;">1.22</span>
<span class="t m" style="top:1178.62px;font-size:22.9px;line-height:22.9px;color:#222;letter-spacing:-0.22px;right:915.80px;transform-origin:100% 0;">1.11</span>
<span class="t m" style="top:1178.62px;font-size:22.9px;line-height:22.9px;color:#222;letter-spacing:-0.22px;right:747.20px;transform-origin:100% 0;">1.13</span>
<span class="t" style="top:1217.49px;font-size:24.8px;line-height:24.8px;color:#1a1a1a;font-weight:700;left:76.51px;transform-origin:0 0;transform:scaleX(0.8878);">France</span>
<span class="t m" style="top:1219.10px;font-size:22.9px;line-height:22.9px;color:#1a1a1a;font-weight:700;letter-spacing:-0.22px;right:2089.50px;transform-origin:100% 0;">862.07</span>
<span class="t m" style="top:1219.10px;font-size:22.9px;line-height:22.9px;color:#1a1a1a;font-weight:700;letter-spacing:-0.22px;right:1922.30px;transform-origin:100% 0;">1.88</span>
<span class="t m" style="top:1219.10px;font-size:22.9px;line-height:22.9px;color:#1a1a1a;font-weight:700;letter-spacing:-0.22px;right:1754.70px;transform-origin:100% 0;">1.88</span>
<span class="t m" style="top:1219.10px;font-size:22.9px;line-height:22.9px;color:#1a1a1a;font-weight:700;letter-spacing:-0.22px;right:1586.50px;transform-origin:100% 0;">661.00</span>
<span class="t m" style="top:1219.10px;font-size:22.9px;line-height:22.9px;color:#1a1a1a;font-weight:700;letter-spacing:-0.22px;right:1419.10px;transform-origin:100% 0;">873.41</span>
<span class="t m" style="top:1219.10px;font-size:22.9px;line-height:22.9px;color:#1a1a1a;font-weight:700;letter-spacing:-0.22px;right:1251.60px;transform-origin:100% 0;">7.60</span>
<span class="t m" style="top:1219.10px;font-size:22.9px;line-height:22.9px;color:#1a1a1a;font-weight:700;letter-spacing:-0.22px;right:1084.00px;transform-origin:100% 0;">2.15</span>
<span class="t m" style="top:1219.10px;font-size:22.9px;line-height:22.9px;color:#1a1a1a;font-weight:700;letter-spacing:-0.22px;right:915.80px;transform-origin:100% 0;">1.96</span>
<span class="t m" style="top:1219.10px;font-size:22.9px;line-height:22.9px;color:#1a1a1a;font-weight:700;letter-spacing:-0.22px;right:747.20px;transform-origin:100% 0;">2.00</span>
<span class="t" style="top:1254.93px;font-size:24.4px;line-height:24.4px;color:#1f1f1f;left:88.00px;transform-origin:0 0;transform:scaleX(0.9949);">Audio</span>
<span class="t m" style="top:1256.20px;font-size:22.9px;line-height:22.9px;color:#222;letter-spacing:-0.22px;right:2089.50px;transform-origin:100% 0;">57.95</span>
<span class="t m" style="top:1256.20px;font-size:22.9px;line-height:22.9px;color:#222;letter-spacing:-0.22px;right:1922.30px;transform-origin:100% 0;">0.06</span>
<span class="t m" style="top:1256.20px;font-size:22.9px;line-height:22.9px;color:#222;letter-spacing:-0.22px;right:1754.70px;transform-origin:100% 0;">0.06</span>
<span class="t m" style="top:1256.20px;font-size:22.9px;line-height:22.9px;color:#222;letter-spacing:-0.22px;right:1586.50px;transform-origin:100% 0;">86.00</span>
<span class="t m" style="top:1256.20px;font-size:22.9px;line-height:22.9px;color:#222;letter-spacing:-0.22px;right:1419.10px;transform-origin:100% 0;">20.87</span>
<span class="t m" style="top:1256.20px;font-size:22.9px;line-height:22.9px;color:#222;letter-spacing:-0.22px;right:1251.60px;transform-origin:100% 0;">0.53</span>
<span class="t m" style="top:1256.20px;font-size:22.9px;line-height:22.9px;color:#222;letter-spacing:-0.22px;right:1084.00px;transform-origin:100% 0;">0.07</span>
<span class="t m" style="top:1256.20px;font-size:22.9px;line-height:22.9px;color:#222;letter-spacing:-0.22px;right:915.80px;transform-origin:100% 0;">0.06</span>
<span class="t m" style="top:1256.20px;font-size:22.9px;line-height:22.9px;color:#222;letter-spacing:-0.22px;right:747.20px;transform-origin:100% 0;">0</span>
<span class="t" style="top:1292.61px;font-size:24.4px;line-height:24.4px;color:#1f1f1f;left:87.03px;transform-origin:0 0;transform:scaleX(0.9698);">Cameras and camcord...</span>
<span class="t m" style="top:1293.88px;font-size:22.9px;line-height:22.9px;color:#222;letter-spacing:-0.22px;right:2089.50px;transform-origin:100% 0;">203.24</span>
<span class="t m" style="top:1293.88px;font-size:22.9px;line-height:22.9px;color:#222;letter-spacing:-0.22px;right:1922.30px;transform-origin:100% 0;">0.20</span>
<span class="t m" style="top:1293.88px;font-size:22.9px;line-height:22.9px;color:#222;letter-spacing:-0.22px;right:1754.70px;transform-origin:100% 0;">0.20</span>
<span class="t m" style="top:1293.88px;font-size:22.9px;line-height:22.9px;color:#222;letter-spacing:-0.22px;right:1586.50px;transform-origin:100% 0;">113.00</span>
<span class="t m" style="top:1293.88px;font-size:22.9px;line-height:22.9px;color:#222;letter-spacing:-0.22px;right:1419.10px;transform-origin:100% 0;">115.60</span>
<span class="t m" style="top:1293.88px;font-size:22.9px;line-height:22.9px;color:#222;letter-spacing:-0.22px;right:1251.60px;transform-origin:100% 0;">0.88</span>
<span class="t m" style="top:1293.88px;font-size:22.9px;line-height:22.9px;color:#222;letter-spacing:-0.22px;right:1084.00px;transform-origin:100% 0;">0.23</span>
<span class="t m" style="top:1293.88px;font-size:22.9px;line-height:22.9px;color:#222;letter-spacing:-0.22px;right:915.80px;transform-origin:100% 0;">0.21</span>
<span class="t m" style="top:1293.88px;font-size:22.9px;line-height:22.9px;color:#222;letter-spacing:-0.22px;right:747.20px;transform-origin:100% 0;">0.22</span>
<span class="t" style="top:1330.29px;font-size:24.4px;line-height:24.4px;color:#1f1f1f;left:87.00px;transform-origin:0 0;transform:scaleX(0.9952);">Cell phones</span>
<span class="t m" style="top:1331.56px;font-size:22.9px;line-height:22.9px;color:#222;letter-spacing:-0.22px;right:2089.50px;transform-origin:100% 0;">60.84</span>
<span class="t m" style="top:1331.56px;font-size:22.9px;line-height:22.9px;color:#222;letter-spacing:-0.22px;right:1922.30px;transform-origin:100% 0;">0.06</span>
<span class="t m" style="top:1331.56px;font-size:22.9px;line-height:22.9px;color:#222;letter-spacing:-0.22px;right:1754.70px;transform-origin:100% 0;">0.06</span>
<span class="t m" style="top:1331.56px;font-size:22.9px;line-height:22.9px;color:#222;letter-spacing:-0.22px;right:1586.50px;transform-origin:100% 0;">78.00</span>
<span class="t m" style="top:1331.56px;font-size:22.9px;line-height:22.9px;color:#222;letter-spacing:-0.22px;right:1419.10px;transform-origin:100% 0;">35.67</span>
<span class="t m" style="top:1331.56px;font-size:22.9px;line-height:22.9px;color:#222;letter-spacing:-0.22px;right:1251.60px;transform-origin:100% 0;">0.62</span>
<span class="t m" style="top:1331.56px;font-size:22.9px;line-height:22.9px;color:#222;letter-spacing:-0.22px;right:1084.00px;transform-origin:100% 0;">0.07</span>
<span class="t m" style="top:1331.56px;font-size:22.9px;line-height:22.9px;color:#222;letter-spacing:-0.22px;right:915.80px;transform-origin:100% 0;">0.06</span>
<span class="t m" style="top:1331.56px;font-size:22.9px;line-height:22.9px;color:#222;letter-spacing:-0.22px;right:747.20px;transform-origin:100% 0;">0</span>
<span class="t" style="top:1452.65px;font-size:24.4px;line-height:24.4px;color:#252423;left:0.04px;transform-origin:0 0;transform:scaleX(0.9787);">Rows: 55</span>
<span class="t" style="top:1452.65px;font-size:24.4px;line-height:24.4px;color:#252423;left:124.42px;transform-origin:0 0;transform:scaleX(0.9824);">Sum:</span>
<span class="t" style="top:1452.65px;font-size:24.4px;line-height:24.4px;color:#252423;left:189.01px;transform-origin:0 0;">NaN</span>
<span class="t" style="top:1452.65px;font-size:24.4px;line-height:24.4px;color:#252423;left:264.00px;transform-origin:0 0;transform:scaleX(0.9745);">Avg:</span>
<span class="t" style="top:1452.65px;font-size:24.4px;line-height:24.4px;color:#252423;left:318.97px;transform-origin:0 0;transform:scaleX(1.0137);">NaN</span>
<span class="t" style="top:1452.65px;font-size:24.4px;line-height:24.4px;color:#252423;left:392.95px;transform-origin:0 0;transform:scaleX(1.0547);">Count: 55</span>
<span class="t m" style="top:1457.82px;font-size:22.9px;line-height:22.9px;color:#222;letter-spacing:-0.42px;left:1304.70px;transform-origin:0 0;">100</span>
<span class="t" style="top:1457.56px;font-size:23.2px;line-height:23.2px;color:#222;left:1348.20px;transform-origin:0 0;transform:scaleX(0.9600);">%</span>
<span class="t" style="top:1452.65px;font-size:24.4px;line-height:24.4px;color:#252423;left:1526.15px;transform-origin:0 0;transform:scaleX(0.9265);">Page</span>
<span class="t" style="top:1452.65px;font-size:24.4px;line-height:24.4px;color:#252423;left:1607.37px;transform-origin:0 0;transform:scaleX(0.8333);">1</span>
<span class="t" style="top:1452.65px;font-size:24.4px;line-height:24.4px;color:#252423;left:1647.98px;transform-origin:0 0;transform:scaleX(1.0225);">of 3</span>
<span class="t" style="top:1452.65px;font-size:24.4px;line-height:24.4px;color:#252423;left:1850.00px;transform-origin:0 0;word-spacing:5px;">1 to 23 of 55</span>
<span class="t" style="top:51.47px;font-size:41.2px;line-height:41.2px;color:#323130;left:2143.36px;transform-origin:0 0;transform:scaleX(0.9786);">Formula Measure</span>
<span class="t" style="top:160.95px;font-size:26.4px;line-height:26.4px;color:#323130;-webkit-text-stroke:0.82px;left:2082.30px;transform-origin:0 0;transform:scaleX(1.0042);">Title</span>
<span class="t" style="top:160.57px;font-size:26.5px;line-height:26.5px;color:#a80000;font-weight:700;left:2138.80px;transform-origin:0 0;">*</span>
<span class="t" style="top:229.77px;font-size:25.2px;line-height:25.2px;color:#323130;left:2095.50px;transform-origin:0 0;transform:scaleX(0.9019);">Average Sales</span>
<span class="t" style="top:306.55px;font-size:26.4px;line-height:26.4px;color:#323130;-webkit-text-stroke:0.82px;left:2080.42px;transform-origin:0 0;transform:scaleX(0.9400);">Formula</span>
<span class="t" style="top:306.37px;font-size:26.5px;line-height:26.5px;color:#a80000;font-weight:700;left:2173.20px;transform-origin:0 0;">*</span>
<span class="t" style="top:373.22px;font-size:26.2px;line-height:26.2px;color:#0f7bd3;left:2093.20px;transform-origin:0 0;transform:scaleX(0.8384);">AVERAGEIF</span>
<span class="t" style="top:373.22px;font-size:26.2px;line-height:26.2px;color:#323130;left:2218.00px;transform-origin:0 0;">([</span>
<span class="t" style="top:373.22px;font-size:26.2px;line-height:26.2px;color:#0f7bd3;left:2236.38px;transform-origin:0 0;transform:scaleX(0.9205);">[Sales]</span>
<span class="t" style="top:373.22px;font-size:26.2px;line-height:26.2px;color:#323130;left:2311.50px;transform-origin:0 0;">,</span>
<span class="t" style="top:373.22px;font-size:26.2px;line-height:26.2px;color:#0f7bd3;left:2325.96px;transform-origin:0 0;transform:scaleX(0.9400);">[Sales - S2]</span>
<span class="t" style="top:373.22px;font-size:26.2px;line-height:26.2px;color:#323130;left:2454.00px;transform-origin:0 0;">,</span>
<span class="t" style="top:373.22px;font-size:26.2px;line-height:26.2px;color:#0f7bd3;left:2469.07px;transform-origin:0 0;transform:scaleX(0.9325);">[Sales - S3]</span>
<span class="t" style="top:373.22px;font-size:26.2px;line-height:26.2px;color:#323130;left:2595.00px;transform-origin:0 0;">]</span>
<span class="t" style="top:373.22px;font-size:26.2px;line-height:26.2px;color:#323130;left:2605.60px;transform-origin:0 0;">,</span>
<span class="t" style="top:413.12px;font-size:26.2px;line-height:26.2px;color:#323130;left:2092.27px;transform-origin:0 0;transform:scaleX(0.9262);">&quot;&gt;100000&quot;)</span>
<span class="t f" style="top:575.20px;font-size:31.5px;line-height:31.5px;color:#444;font-style:italic;left:2101.60px;transform-origin:0 0;transform:scaleX(1.3600);"><span style="color:#1a4fa8">f</span>x</span>
<span class="t" style="top:625.53px;font-size:23px;line-height:23px;color:#555;font-weight:700;left:2114.98px;transform-origin:0 0;transform:scaleX(0.9212);">Example</span>
<span class="t" style="top:625.53px;font-size:23px;line-height:23px;color:#605e5c;left:2206.20px;transform-origin:0 0;">:</span>
<span class="t" style="top:625.53px;font-size:23px;line-height:23px;color:#605e5c;font-style:italic;left:2221.69px;transform-origin:0 0;transform:scaleX(0.9872);">[Margin] + [Revenue]</span>
<span class="t" style="top:659.73px;font-size:23px;line-height:23px;color:#605e5c;left:2115.90px;transform-origin:0 0;transform:scaleX(0.9386);">Use <b style="color:#484644">Ctrl + Space</b> to open suggestion, also select any</span>
<span class="t" style="top:693.73px;font-size:23px;line-height:23px;color:#605e5c;left:2115.90px;transform-origin:0 0;transform:scaleX(0.9951);">column or cell to insert the reference</span>
<span class="t" style="top:762.05px;font-size:26.4px;line-height:26.4px;color:#323130;-webkit-text-stroke:0.82px;left:2080.73px;transform-origin:0 0;transform:scaleX(0.9368);">Row aggregation type</span>
<span class="t" style="top:760.57px;font-size:26.5px;line-height:26.5px;color:#a80000;font-weight:700;left:2328.30px;transform-origin:0 0;">*</span>
<span class="t" style="top:826.64px;font-size:25.7px;line-height:25.7px;color:#323130;left:2103.29px;transform-origin:0 0;transform:scaleX(0.9535);">Formula</span>
<span class="t" style="top:905.04px;font-size:25.7px;line-height:25.7px;color:#323130;left:2122.02px;transform-origin:0 0;transform:scaleX(0.9904);">Description</span>
<span class="t" style="top:1412.51px;font-size:26.8px;line-height:26.8px;color:#323130;left:2321.41px;transform-origin:0 0;transform:scaleX(0.9858);">Cancel</span>
<span class="t" style="top:1412.18px;font-size:27.2px;line-height:27.2px;color:#fff;-webkit-text-stroke:0.84px;left:2505.86px;transform-origin:0 0;transform:scaleX(1.0219);">Update</span>
</div>
</body></html>
